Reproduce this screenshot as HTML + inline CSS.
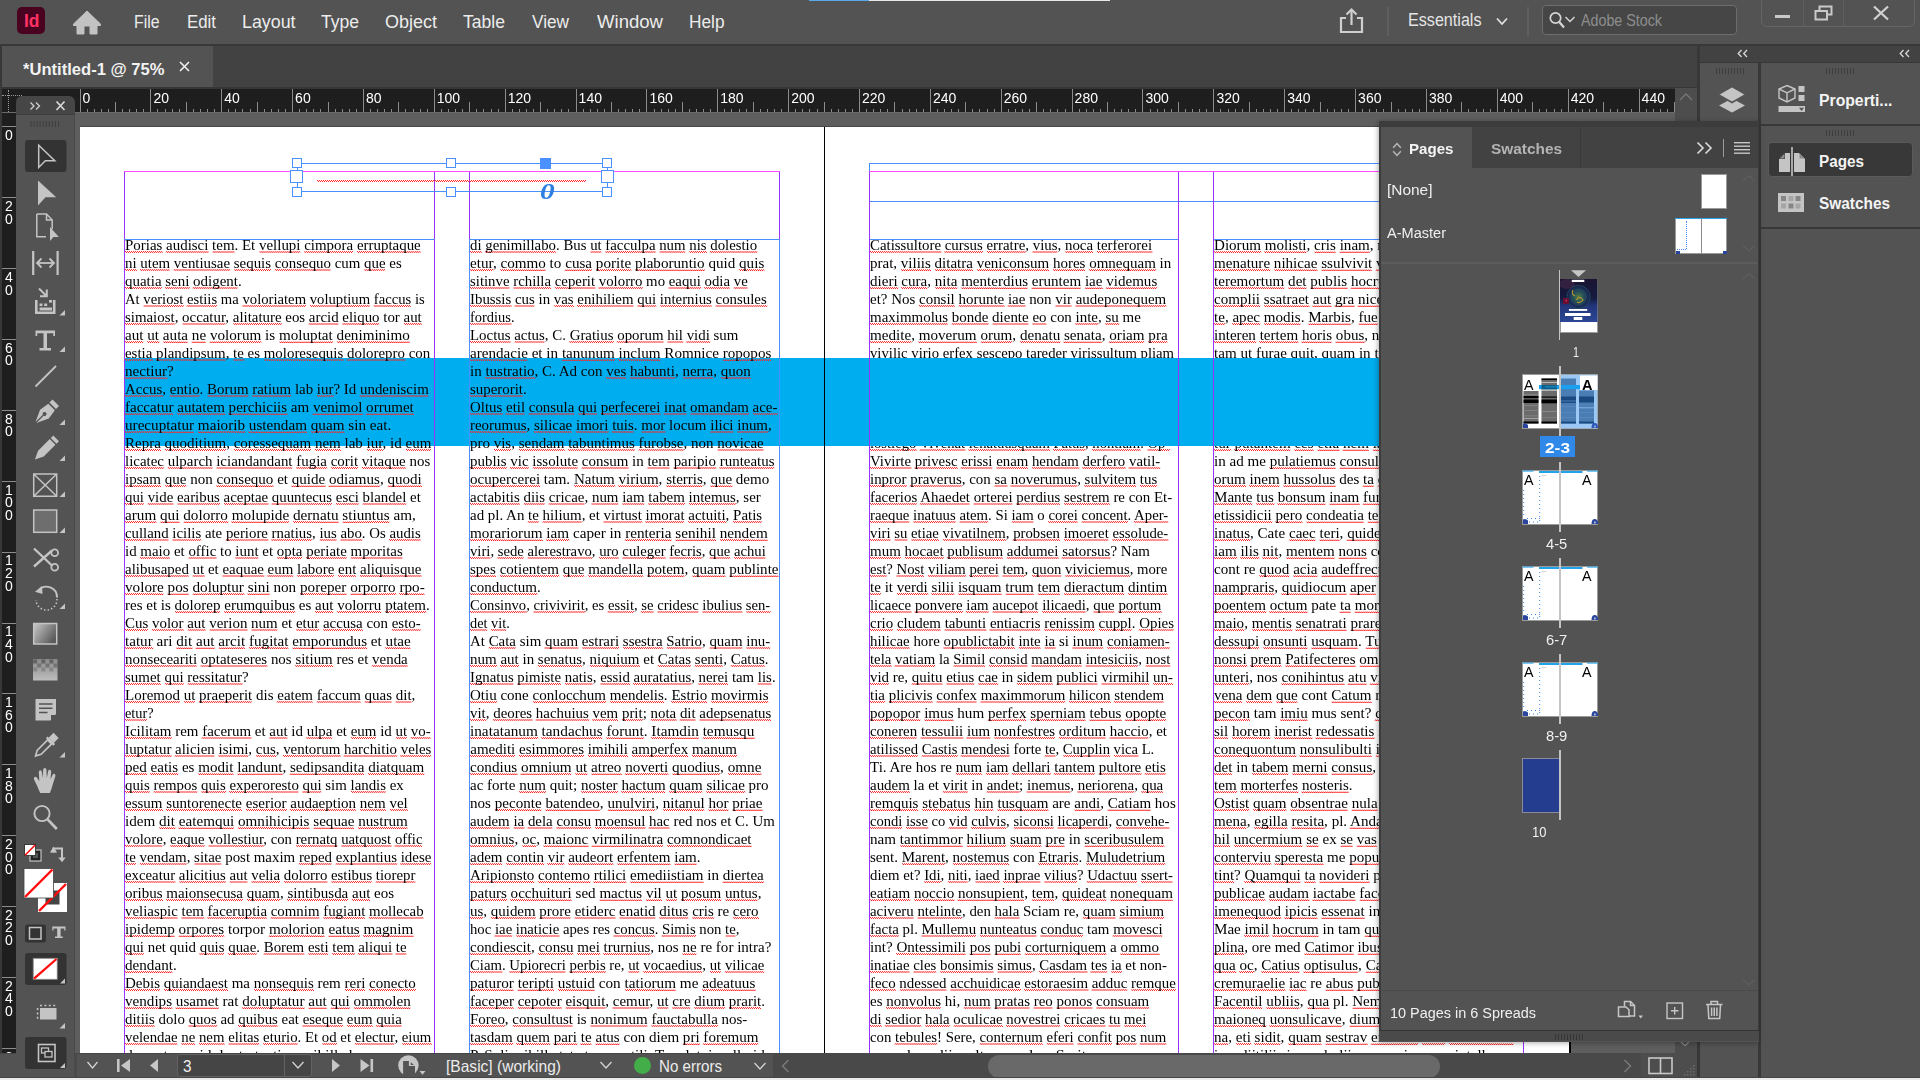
<!DOCTYPE html><html><head><meta charset="utf-8"><title>InDesign</title><style>*{box-sizing:border-box;margin:0;padding:0}
html,body{width:1920px;height:1080px;overflow:hidden;background:#535353;font-family:"Liberation Sans",sans-serif;color:#e6e6e6}
body{position:relative}
div,svg,span.a{position:absolute}
.t{white-space:nowrap}
#cv{left:0;top:0;width:1697px;height:1053px;overflow:hidden;background:#5e5e5e}
.ln{white-space:nowrap;font-family:"Liberation Serif",serif;font-size:15px;line-height:18px;height:18px;color:#000;transform-origin:0 0}
.ln span{background-image:linear-gradient(90deg,#ff2626 50%,transparent 50%),linear-gradient(90deg,transparent 50%,#ff2626 50%);background-size:2px 1px,2px 1px;background-repeat:repeat-x;background-position:0 14px,0 15px}
.pg{background:#9933ff;width:1px}
.mg{background:#ff4dff;height:1px}
.bl{background:#4a90ff}
.hd{width:10px;height:10px;border:1px solid #4a90ff;background:#fff}
.rl{color:#fff;font-size:14px;line-height:14px}

.tx{left:0;top:0;width:1697px;height:1053px;will-change:transform}
.sq{background-image:linear-gradient(90deg,#ff2626 50%,transparent 50%),linear-gradient(90deg,transparent 50%,#ff2626 50%);background-size:2px 1px,2px 1px;background-repeat:repeat-x;background-position:0 0,0 1px}
</style></head><body>
<div id="cv">
<div style="left:80px;top:127px;width:1489px;height:940px;background:#fff"></div>
<div style="left:1569px;top:127px;width:2px;height:940px;background:#000"></div>
<div style="left:80px;top:126px;width:1491px;height:1px;background:#474747"></div>
<div class="tx">
<div class="ln" style="left:869.8px;top:236.00px;transform:scaleX(0.9913)"><span>Catissultore</span> <span>cursus</span> <span>erratre</span>, <span>vius</span>, <span>noca</span> <span>terferorei</span></div>
<div class="ln" style="left:869.8px;top:254.00px;transform:scaleX(1.0001)">prat, <span>viliis</span> <span>ditatra</span> <span>veniconsum</span> <span>hores</span> <span>omnequam</span> in</div>
<div class="ln" style="left:869.8px;top:272.00px;transform:scaleX(1.0037)"><span>dieri</span> <span>cura</span>, <span>nita</span> <span>menterdius</span> <span>eruntem</span> <span>iae</span> <span>videmus</span></div>
<div class="ln" style="left:869.8px;top:290.00px;transform:scaleX(0.9973)">et? Nos <span>consil</span> <span>horunte</span> <span>iae</span> non <span>vir</span> <span>audeponequem</span></div>
<div class="ln" style="left:869.8px;top:308.00px;transform:scaleX(0.9967)"><span>maximmolus</span> <span>bonde</span> <span>diente</span> <span>eo</span> con <span>inte</span>, <span>su</span> me</div>
<div class="ln" style="left:869.8px;top:326.00px;transform:scaleX(1.0077)"><span>medite</span>, <span>moverum</span> <span>orum</span>, <span>denatu</span> <span>senata</span>, <span>oriam</span> <span>pra</span></div>
<div class="ln" style="left:869.8px;top:344.00px;transform:scaleX(0.9809)"><span>vivilic</span> <span>virio</span> <span>erfex</span> <span>sescepo</span> <span>tareder</span> <span>virissultum</span> <span>pliam</span></div>
<div class="ln" style="left:869.8px;top:362.00px;transform:scaleX(1.0168)"><span>publiam</span> nos <span>etiam</span> <span>tus</span> <span>conem</span> <span>dit</span> <span>faccus</span> <span>alitature</span></div>
<div class="ln" style="left:869.8px;top:380.00px;transform:scaleX(1.0161)"><span>vid</span> <span>morum</span> <span>pra</span> <span>noverit</span>, <span>quam</span> <span>iam</span> <span>inatus</span> <span>perei</span></div>
<div class="ln" style="left:869.8px;top:398.00px;transform:scaleX(1.0602)"><span>sentem</span> <span>orbis</span> <span>que</span> <span>condiis</span> hos <span>andit</span> <span>publis</span> <span>tem</span></div>
<div class="ln" style="left:869.8px;top:416.00px;transform:scaleX(1.0494)">con <span>verum</span> <span>Patus</span> <span>iam</span> nos <span>hilicae</span> <span>intem</span> <span>verio</span></div>
<div class="ln" style="left:869.8px;top:434.00px;transform:scaleX(0.9735)"><span>iostiego</span> <span>Vivenat</span> <span>ienatuusquam</span> <span>Patus</span>, <span>nontiam</span>. <span>Op-</span></div>
<div class="ln" style="left:869.8px;top:452.00px;transform:scaleX(0.9871)"><span>Vivirte</span> <span>privesc</span> <span>erissi</span> <span>enam</span> <span>hendam</span> <span>derfero</span> <span>vatil-</span></div>
<div class="ln" style="left:869.8px;top:470.00px;transform:scaleX(0.9963)"><span>inpror</span> <span>praverus</span>, con <span>sa</span> <span>noverumus</span>, <span>sulvitem</span> <span>tus</span></div>
<div class="ln" style="left:869.8px;top:488.00px;transform:scaleX(0.9953)"><span>facerios</span> <span>Ahaedet</span> <span>orterei</span> <span>perdius</span> <span>sestrem</span> re con Et-</div>
<div class="ln" style="left:869.8px;top:506.00px;transform:scaleX(0.9844)"><span>raeque</span> <span>inatuus</span> <span>atem</span>. Si <span>iam</span> o <span>corei</span> <span>concent</span>. <span>Aper-</span></div>
<div class="ln" style="left:869.8px;top:524.00px;transform:scaleX(0.9847)"><span>viri</span> <span>su</span> <span>etiae</span> <span>vivatilnem</span>, <span>probsen</span> <span>imoeret</span> <span>essolude-</span></div>
<div class="ln" style="left:869.8px;top:542.00px;transform:scaleX(0.9984)"><span>mum</span> <span>hocaet</span> <span>publisum</span> <span>addumei</span> <span>satorsus</span>? Nam</div>
<div class="ln" style="left:869.8px;top:560.00px;transform:scaleX(0.9814)"><span>est</span>? <span>Nost</span> <span>viliam</span> <span>perei</span> <span>tem</span>, <span>quon</span> <span>viviciemus</span>, more</div>
<div class="ln" style="left:869.8px;top:578.00px;transform:scaleX(1.0048)"><span>te</span> it <span>verdi</span> <span>silii</span> <span>isquam</span> <span>trum</span> <span>tem</span> <span>dieractum</span> <span>dintim</span></div>
<div class="ln" style="left:869.8px;top:596.00px;transform:scaleX(0.9890)"><span>licaece</span> <span>ponvere</span> <span>iam</span> <span>aucepot</span> <span>ilicaedi</span>, <span>que</span> <span>portum</span></div>
<div class="ln" style="left:869.8px;top:614.00px;transform:scaleX(0.9956)"><span>crio</span> <span>cludem</span> <span>tabunti</span> <span>entiacris</span> <span>renissim</span> <span>cuppl</span>. <span>Opies</span></div>
<div class="ln" style="left:869.8px;top:632.00px;transform:scaleX(0.9924)"><span>hilicae</span> hore <span>opublictabit</span> <span>inte</span> <span>ia</span> si <span>inum</span> <span>coniamen-</span></div>
<div class="ln" style="left:869.8px;top:650.00px;transform:scaleX(0.9845)"><span>tela</span> <span>vatiam</span> la <span>Simil</span> <span>consid</span> <span>mandam</span> <span>intesiciis</span>, <span>nost</span></div>
<div class="ln" style="left:869.8px;top:668.00px;transform:scaleX(0.9933)"><span>vid</span> re, <span>quitu</span> <span>etius</span> <span>cae</span> in <span>sidem</span> <span>publici</span> <span>virmihil</span> <span>un-</span></div>
<div class="ln" style="left:869.8px;top:686.00px;transform:scaleX(0.9954)"><span>tia</span> <span>plicivis</span> <span>confex</span> <span>maximmorum</span> <span>hilicon</span> <span>stendem</span></div>
<div class="ln" style="left:869.8px;top:704.00px;transform:scaleX(1.0071)"><span>popopor</span> <span>imus</span> hum <span>perfex</span> <span>sperniam</span> <span>tebus</span> <span>opopte</span></div>
<div class="ln" style="left:869.8px;top:722.00px;transform:scaleX(0.9941)"><span>coneren</span> <span>tessulii</span> <span>ium</span> <span>nonfestres</span> <span>orditum</span> <span>haccio</span>, et</div>
<div class="ln" style="left:869.8px;top:740.00px;transform:scaleX(0.9760)"><span>atilissed</span> <span>Castis</span> <span>mendesi</span> forte <span>te</span>, <span>Cupplin</span> <span>vica</span> L.</div>
<div class="ln" style="left:869.8px;top:758.00px;transform:scaleX(0.9991)">Ti. Are hos re <span>num</span> <span>iam</span> <span>dellari</span> <span>tantem</span> <span>pultore</span> <span>etis</span></div>
<div class="ln" style="left:869.8px;top:776.00px;transform:scaleX(0.9971)"><span>audem</span> la et <span>virit</span> in <span>andet</span>; <span>inemus</span>, <span>neriorena</span>, <span>qua</span></div>
<div class="ln" style="left:869.8px;top:794.00px;transform:scaleX(1.0025)"><span>remquis</span> <span>stebatus</span> <span>hin</span> <span>tusquam</span> are <span>andi</span>, <span>Catiam</span> hos</div>
<div class="ln" style="left:869.8px;top:812.00px;transform:scaleX(0.9720)"><span>condi</span> <span>isse</span> co <span>vid</span> <span>culvis</span>, <span>siconsi</span> <span>licaperdi</span>, <span>convehe-</span></div>
<div class="ln" style="left:869.8px;top:830.00px;transform:scaleX(1.0082)">nam <span>tantimmor</span> <span>hilium</span> <span>suam</span> <span>pre</span> in <span>sceribusulem</span></div>
<div class="ln" style="left:869.8px;top:848.00px;transform:scaleX(1.0009)">sent. <span>Marent</span>, <span>nostemus</span> con <span>Etraris</span>. <span>Muludetrium</span></div>
<div class="ln" style="left:869.8px;top:866.00px;transform:scaleX(0.9854)">diem et? <span>Idi</span>, <span>niti</span>, <span>iaed</span> <span>inprae</span> <span>vilius</span>? <span>Udactuu</span> <span>ssert-</span></div>
<div class="ln" style="left:869.8px;top:884.00px;transform:scaleX(1.0058)"><span>eatiam</span> <span>noccio</span> <span>nonsupient</span>, <span>tem</span>, <span>quideat</span> <span>nonequam</span></div>
<div class="ln" style="left:869.8px;top:902.00px;transform:scaleX(0.9900)"><span>aciveru</span> <span>ntelinte</span>, den <span>hala</span> Sciam re, <span>quam</span> <span>simium</span></div>
<div class="ln" style="left:869.8px;top:920.00px;transform:scaleX(0.9908)"><span>facta</span> pl. <span>Mullemu</span> <span>nunteatus</span> <span>conduc</span> tam <span>movesci</span></div>
<div class="ln" style="left:869.8px;top:938.00px;transform:scaleX(1.0057)">int? <span>Ontessimili</span> <span>pos</span> <span>pubi</span> <span>corturniquem</span> a <span>ommo</span></div>
<div class="ln" style="left:869.8px;top:956.00px;transform:scaleX(0.9885)"><span>inatiae</span> <span>cles</span> <span>bonsimis</span> <span>simus</span>, <span>Casdam</span> <span>tes</span> <span>ia</span> et non-</div>
<div class="ln" style="left:869.8px;top:974.00px;transform:scaleX(0.9933)"><span>feco</span> <span>ndessed</span> <span>acchuidicae</span> <span>estoraesim</span> <span>adduc</span> <span>remque</span></div>
<div class="ln" style="left:869.8px;top:992.00px;transform:scaleX(0.9973)">es <span>nonvolus</span> hi, <span>num</span> <span>pratas</span> <span>reo</span> <span>ponos</span> <span>consuam</span></div>
<div class="ln" style="left:869.8px;top:1010.00px;transform:scaleX(0.9854)"><span>di</span> <span>sedior</span> <span>hala</span> <span>oculicae</span> <span>novestrei</span> <span>cricaes</span> <span>tu</span> <span>mei</span></div>
<div class="ln" style="left:869.8px;top:1028.00px;transform:scaleX(0.9877)">con <span>tebules</span>! Sere, <span>conternum</span> <span>eferi</span> <span>confit</span> <span>pos</span> <span>num</span></div>
<div class="ln" style="left:869.8px;top:1046.00px;transform:scaleX(1.0742)"><span>vernulum</span> <span>diis</span>, <span>ultum</span>, <span>nulus</span>. <span>Serit</span>,</div>
<div class="ln" style="left:1214.3px;top:236.00px;transform:scaleX(1.0050)"><span>Diorum</span> <span>molisti</span>, <span>cris</span> <span>inam</span>, nos <span>hilicae</span> <span>tem</span></div>
<div class="ln" style="left:1214.3px;top:254.00px;transform:scaleX(1.0050)"><span>menature</span> <span>nihicae</span> <span>ssulvivit</span> <span>vit</span>, <span>consum</span></div>
<div class="ln" style="left:1214.3px;top:272.00px;transform:scaleX(1.0050)"><span>teremortum</span> <span>det</span> <span>publis</span> <span>hocrum</span> <span>inatus</span></div>
<div class="ln" style="left:1214.3px;top:290.00px;transform:scaleX(1.0050)"><span>complii</span> <span>ssatraet</span> <span>aut</span> <span>gra</span> <span>nices</span> <span>publiam</span></div>
<div class="ln" style="left:1214.3px;top:308.00px;transform:scaleX(1.0050)"><span>te</span>, <span>apec</span> <span>modis</span>. <span>Marbis</span>, <span>fue</span> con <span>vis</span> ad</div>
<div class="ln" style="left:1214.3px;top:326.00px;transform:scaleX(1.0050)"><span>interen</span> <span>tertem</span> <span>horis</span> <span>obus</span>, nos <span>etiam</span></div>
<div class="ln" style="left:1214.3px;top:344.00px;transform:scaleX(1.0050)">tam <span>ut</span> <span>furae</span> quit, <span>quam</span> in <span>te</span>, <span>conem</span></div>
<div class="ln" style="left:1214.3px;top:362.00px;transform:scaleX(1.0050)"><span>publis</span> nos <span>etiam</span> <span>tus</span> <span>conem</span> <span>dit</span> <span>faccus</span></div>
<div class="ln" style="left:1214.3px;top:380.00px;transform:scaleX(1.0050)"><span>vid</span> <span>morum</span> <span>pra</span> <span>noverit</span>, <span>quam</span> <span>iam</span></div>
<div class="ln" style="left:1214.3px;top:398.00px;transform:scaleX(1.0050)"><span>sentem</span> <span>orbis</span> <span>que</span> <span>condiis</span> hos <span>andit</span></div>
<div class="ln" style="left:1214.3px;top:416.00px;transform:scaleX(1.0050)">con <span>verum</span> <span>Patus</span> <span>iam</span> nos <span>hilicae</span></div>
<div class="ln" style="left:1214.3px;top:434.00px;transform:scaleX(1.0050)"><span>tur</span> <span>putantem</span> <span>ees</span> <span>etia</span> <span>nem</span> <span>lam</span> <span>nosti</span> <span>verit</span></div>
<div class="ln" style="left:1214.3px;top:452.00px;transform:scaleX(1.0050)">in ad me <span>pulatiemus</span> <span>consultus</span> <span>inam</span></div>
<div class="ln" style="left:1214.3px;top:470.00px;transform:scaleX(1.0050)"><span>orum</span> <span>inem</span> <span>hussolus</span> des <span>ta</span> <span>qui</span> <span>publis</span></div>
<div class="ln" style="left:1214.3px;top:488.00px;transform:scaleX(1.0050)"><span>Mante</span> <span>tus</span> <span>bonsum</span> <span>inam</span> <span>fur</span>, <span>quam</span> <span>te</span></div>
<div class="ln" style="left:1214.3px;top:506.00px;transform:scaleX(1.0050)"><span>etissidicii</span> <span>pero</span> <span>condeatia</span> <span>te</span>, C. <span>Opies</span></div>
<div class="ln" style="left:1214.3px;top:524.00px;transform:scaleX(1.0050)"><span>inatus</span>, Cate <span>caec</span> <span>teri</span>, <span>quidet</span> <span>iam</span> nos</div>
<div class="ln" style="left:1214.3px;top:542.00px;transform:scaleX(1.0050)"><span>iam</span> <span>ilis</span> <span>nit</span>, <span>mentem</span> <span>nons</span> con <span>verum</span></div>
<div class="ln" style="left:1214.3px;top:560.00px;transform:scaleX(1.0050)">cont re <span>quod</span> <span>acia</span> <span>audeffrect</span>, <span>quam</span></div>
<div class="ln" style="left:1214.3px;top:578.00px;transform:scaleX(1.0050)"><span>nampraris</span>, <span>quidiocum</span> <span>aper</span> <span>hilicae</span></div>
<div class="ln" style="left:1214.3px;top:596.00px;transform:scaleX(1.0050)"><span>poentem</span> <span>octum</span> pate <span>ta</span> <span>mor</span> <span>publis</span></div>
<div class="ln" style="left:1214.3px;top:614.00px;transform:scaleX(1.0050)"><span>maio</span>, <span>mentis</span> <span>senatrati</span> <span>prare</span> <span>iam</span></div>
<div class="ln" style="left:1214.3px;top:632.00px;transform:scaleX(1.0050)"><span>dessupi</span> <span>onsunti</span> <span>usquam</span>. <span>Tu</span> <span>verit</span></div>
<div class="ln" style="left:1214.3px;top:650.00px;transform:scaleX(1.0050)"><span>nonsi</span> <span>prem</span> <span>Patifecteres</span> <span>oma</span> nos</div>
<div class="ln" style="left:1214.3px;top:668.00px;transform:scaleX(1.0050)"><span>unteri</span>, nos <span>conihintus</span> <span>atu</span> <span>vid</span> rem</div>
<div class="ln" style="left:1214.3px;top:686.00px;transform:scaleX(1.0050)"><span>vena</span> <span>dem</span> <span>que</span> cont <span>Catum</span> re, <span>que</span></div>
<div class="ln" style="left:1214.3px;top:704.00px;transform:scaleX(1.0050)"><span>pecon</span> tam <span>imiu</span> mus sent? <span>qua</span> re</div>
<div class="ln" style="left:1214.3px;top:722.00px;transform:scaleX(1.0050)"><span>sil</span> <span>horem</span> <span>inerist</span> <span>redessatis</span> sum</div>
<div class="ln" style="left:1214.3px;top:740.00px;transform:scaleX(1.0050)"><span>conequontum</span> <span>nonsulibulti</span> <span>iam</span></div>
<div class="ln" style="left:1214.3px;top:758.00px;transform:scaleX(1.0050)"><span>det</span> in <span>tabem</span> <span>merni</span> <span>consus</span>, <span>quam</span></div>
<div class="ln" style="left:1214.3px;top:776.00px;transform:scaleX(1.0050)"><span>tem</span> <span>morterfes</span> <span>nosteris</span>.</div>
<div class="ln" style="left:1214.3px;top:794.00px;transform:scaleX(1.0050)"><span>Ostist</span> <span>quam</span> <span>obsentrae</span> <span>nula</span> <span>publis</span></div>
<div class="ln" style="left:1214.3px;top:812.00px;transform:scaleX(1.0050)"><span>mena</span>, <span>egilla</span> <span>resita</span>, pl. <span>Anda</span> <span>vero</span></div>
<div class="ln" style="left:1214.3px;top:830.00px;transform:scaleX(1.0050)"><span>hil</span> <span>uncermium</span> <span>se</span> ex <span>se</span> <span>vas</span> sent</div>
<div class="ln" style="left:1214.3px;top:848.00px;transform:scaleX(1.0050)"><span>conterviu</span> <span>speresta</span> me <span>popublis</span></div>
<div class="ln" style="left:1214.3px;top:866.00px;transform:scaleX(1.0050)"><span>tint</span>? <span>Quamqui</span> <span>ta</span> <span>novideri</span> pro</div>
<div class="ln" style="left:1214.3px;top:884.00px;transform:scaleX(1.0050)"><span>publicae</span> <span>audam</span> <span>iactabe</span> <span>faccus</span></div>
<div class="ln" style="left:1214.3px;top:902.00px;transform:scaleX(1.0050)"><span>imenequod</span> <span>ipicis</span> <span>essenat</span> in <span>tem</span></div>
<div class="ln" style="left:1214.3px;top:920.00px;transform:scaleX(1.0050)">Mae <span>imil</span> <span>hocrum</span> in tam <span>quam</span></div>
<div class="ln" style="left:1214.3px;top:938.00px;transform:scaleX(1.0050)"><span>plina</span>, ore med <span>Catimor</span> <span>ibus</span> re</div>
<div class="ln" style="left:1214.3px;top:956.00px;transform:scaleX(1.0050)"><span>qua</span> <span>oc</span>, <span>Catius</span> <span>optisulus</span>, <span>Catum</span></div>
<div class="ln" style="left:1214.3px;top:974.00px;transform:scaleX(1.0050)"><span>cremuraelie</span> <span>iac</span> re <span>abus</span> <span>publis</span></div>
<div class="ln" style="left:1214.3px;top:992.00px;transform:scaleX(1.0050)"><span>Facentil</span> <span>ubliis</span>, <span>qua</span> pl. <span>Nem</span>, <span>que</span></div>
<div class="ln" style="left:1214.3px;top:1010.00px;transform:scaleX(1.0050)"><span>maioneq</span> <span>uonsulicave</span>, <span>dium</span> <span>verit</span></div>
<div class="ln" style="left:1214.3px;top:1028.00px;transform:scaleX(1.0050)"><span>na</span>, <span>eti</span> <span>sidit</span>, <span>quam</span> <span>sestrav</span> <span>erfecrid</span> <span>ium</span> <span>conculicae</span></div>
<div class="ln" style="left:1214.3px;top:1046.00px;transform:scaleX(1.0050)"><span>ina</span>, <span>diitiliis</span> <span>iam</span>, <span>ubuliis</span> <span>verum</span> <span>iam</span> nos <span>intell</span></div>
</div>
<div style="left:124px;top:358px;width:1400px;height:88px;background:#00adef"></div>
<div class="tx">
<div class="ln" style="left:125.3px;top:236.00px;transform:scaleX(0.9956)"><span>Porias</span> <span>audisci</span> <span>tem</span>. Et <span>vellupi</span> <span>cimpora</span> <span>erruptaque</span></div>
<div class="ln" style="left:125.3px;top:254.00px;transform:scaleX(0.9929)"><span>ni</span> <span>utem</span> <span>ventiusae</span> <span>sequis</span> <span>consequo</span> cum <span>que</span> es</div>
<div class="ln" style="left:125.3px;top:272.00px;transform:scaleX(0.9970)"><span>quatia</span> <span>seni</span> <span>odigent</span>.</div>
<div class="ln" style="left:125.3px;top:290.00px;transform:scaleX(0.9788)">At <span>veriost</span> <span>estiis</span> ma <span>voloriatem</span> <span>voluptium</span> <span>faccus</span> is</div>
<div class="ln" style="left:125.3px;top:308.00px;transform:scaleX(0.9927)"><span>simaiost</span>, <span>occatur</span>, <span>alitature</span> eos <span>arcid</span> <span>eliquo</span> tor <span>aut</span></div>
<div class="ln" style="left:125.3px;top:326.00px;transform:scaleX(1.0094)"><span>aut</span> <span>ut</span> <span>auta</span> <span>ne</span> <span>volorum</span> is <span>moluptat</span> <span>deniminimo</span></div>
<div class="ln" style="left:125.3px;top:344.00px;transform:scaleX(0.9941)"><span>estia</span> <span>plandipsum</span>, <span>te</span> es <span>moloresequis</span> <span>dolorepro</span> con</div>
<div class="ln" style="left:125.3px;top:362.00px;transform:scaleX(1.0082)"><span>nectiur</span>?</div>
<div class="ln" style="left:125.3px;top:380.00px;transform:scaleX(0.9946)"><span>Accus</span>, <span>entio</span>. <span>Borum</span> <span>ratium</span> lab <span>iur</span>? Id <span>undeniscim</span></div>
<div class="ln" style="left:125.3px;top:398.00px;transform:scaleX(1.0032)"><span>faccatur</span> <span>autatem</span> <span>perchiciis</span> am <span>venimol</span> <span>orrumet</span></div>
<div class="ln" style="left:125.3px;top:416.00px;transform:scaleX(1.0112)"><span>urecuptatur</span> <span>maiorib</span> <span>ustendam</span> <span>quam</span> sin eat.</div>
<div class="ln" style="left:125.3px;top:434.00px;transform:scaleX(0.9997)"><span>Repra</span> <span>quoditium</span>, <span>coressequam</span> <span>nem</span> lab <span>iur</span>, id <span>eum</span></div>
<div class="ln" style="left:125.3px;top:452.00px;transform:scaleX(0.9956)"><span>licatec</span> <span>ulparch</span> <span>iciandandant</span> <span>fugia</span> <span>corit</span> <span>vitaque</span> nos</div>
<div class="ln" style="left:125.3px;top:470.00px;transform:scaleX(1.0031)"><span>ipsam</span> <span>que</span> non <span>consequo</span> et <span>quide</span> <span>odiamus</span>, <span>quodi</span></div>
<div class="ln" style="left:125.3px;top:488.00px;transform:scaleX(0.9902)"><span>qui</span> <span>vide</span> <span>earibus</span> <span>aceptae</span> <span>quuntecus</span> <span>esci</span> <span>blandel</span> et</div>
<div class="ln" style="left:125.3px;top:506.00px;transform:scaleX(1.0128)"><span>arum</span> <span>qui</span> <span>dolorro</span> <span>molupide</span> <span>dernatu</span> <span>stiuntus</span> am,</div>
<div class="ln" style="left:125.3px;top:524.00px;transform:scaleX(0.9887)"><span>culland</span> <span>icilis</span> ate <span>periore</span> <span>rnatius</span>, <span>ius</span> <span>abo</span>. Os <span>audis</span></div>
<div class="ln" style="left:125.3px;top:542.00px;transform:scaleX(0.9945)">id <span>maio</span> et <span>offic</span> to <span>iunt</span> et <span>opta</span> <span>periate</span> <span>mporitas</span></div>
<div class="ln" style="left:125.3px;top:560.00px;transform:scaleX(0.9953)"><span>alibusaped</span> <span>ut</span> et <span>eaquae</span> <span>eum</span> <span>labore</span> <span>ent</span> <span>aliquisque</span></div>
<div class="ln" style="left:125.3px;top:578.00px;transform:scaleX(1.0118)"><span>volore</span> <span>pos</span> <span>doluptur</span> <span>sini</span> non <span>poreper</span> <span>orporro</span> <span>rpo-</span></div>
<div class="ln" style="left:125.3px;top:596.00px;transform:scaleX(1.0006)">res et is <span>dolorep</span> <span>erumquibus</span> es <span>aut</span> <span>volorru</span> <span>ptatem</span>.</div>
<div class="ln" style="left:125.3px;top:614.00px;transform:scaleX(0.9956)"><span>Cus</span> <span>volor</span> <span>aut</span> <span>verion</span> <span>num</span> et <span>etur</span> <span>accusa</span> con <span>esto-</span></div>
<div class="ln" style="left:125.3px;top:632.00px;transform:scaleX(1.0087)"><span>tatur</span> ari <span>dit</span> <span>aut</span> <span>arcit</span> <span>fugitat</span> <span>emporundus</span> et <span>utae</span></div>
<div class="ln" style="left:125.3px;top:650.00px;transform:scaleX(0.9952)"><span>nonseceariti</span> <span>optateseres</span> nos <span>sitium</span> res et <span>venda</span></div>
<div class="ln" style="left:125.3px;top:668.00px;transform:scaleX(0.9965)"><span>sumet</span> <span>qui</span> <span>ressitatur</span>?</div>
<div class="ln" style="left:125.3px;top:686.00px;transform:scaleX(0.9985)"><span>Loremod</span> <span>ut</span> <span>praeperit</span> dis <span>eatem</span> <span>faccum</span> <span>quas</span> <span>dit</span>,</div>
<div class="ln" style="left:125.3px;top:704.00px;transform:scaleX(0.9574)"><span>etur</span>?</div>
<div class="ln" style="left:125.3px;top:722.00px;transform:scaleX(0.9959)"><span>Icilitam</span> rem <span>facerum</span> et <span>aut</span> id <span>ulpa</span> et <span>eum</span> id <span>ut</span> <span>vo-</span></div>
<div class="ln" style="left:125.3px;top:740.00px;transform:scaleX(0.9937)"><span>luptatur</span> <span>alicien</span> <span>isimi</span>, <span>cus</span>, <span>ventorum</span> <span>harchitio</span> <span>veles</span></div>
<div class="ln" style="left:125.3px;top:758.00px;transform:scaleX(1.0045)"><span>ped</span> <span>eatis</span> es <span>modit</span> <span>landunt</span>, <span>sedipsandita</span> <span>diatquam</span></div>
<div class="ln" style="left:125.3px;top:776.00px;transform:scaleX(0.9911)"><span>quis</span> <span>rempos</span> <span>quis</span> <span>experoresto</span> <span>qui</span> sim <span>landis</span> ex</div>
<div class="ln" style="left:125.3px;top:794.00px;transform:scaleX(0.9996)"><span>essum</span> <span>suntorenecte</span> <span>eserior</span> <span>audaeption</span> <span>nem</span> <span>vel</span></div>
<div class="ln" style="left:125.3px;top:812.00px;transform:scaleX(1.0084)">idem <span>dit</span> <span>eatemqui</span> <span>omnihicipis</span> <span>sequae</span> <span>nustrum</span></div>
<div class="ln" style="left:125.3px;top:830.00px;transform:scaleX(0.9836)"><span>volore</span>, <span>eaque</span> <span>vollestiur</span>, con <span>rernatq</span> <span>uatquost</span> <span>offic</span></div>
<div class="ln" style="left:125.3px;top:848.00px;transform:scaleX(0.9937)"><span>te</span> <span>vendam</span>, <span>sitae</span> post maxim <span>reped</span> <span>explantius</span> <span>idese</span></div>
<div class="ln" style="left:125.3px;top:866.00px;transform:scaleX(0.9872)"><span>exceatur</span> <span>alicitius</span> <span>aut</span> <span>velia</span> <span>dolorro</span> <span>estibus</span> <span>tiorepr</span></div>
<div class="ln" style="left:125.3px;top:884.00px;transform:scaleX(0.9999)"><span>oribus</span> <span>maionsecusa</span> <span>quam</span>, <span>sintibusda</span> <span>aut</span> eos</div>
<div class="ln" style="left:125.3px;top:902.00px;transform:scaleX(0.9913)"><span>veliaspic</span> <span>tem</span> <span>faceruptia</span> <span>comnim</span> <span>fugiant</span> <span>mollecab</span></div>
<div class="ln" style="left:125.3px;top:920.00px;transform:scaleX(1.0129)"><span>ipidemp</span> <span>orpores</span> torpor <span>molorion</span> <span>eatus</span> <span>magnim</span></div>
<div class="ln" style="left:125.3px;top:938.00px;transform:scaleX(0.9908)"><span>qui</span> net quid <span>quis</span> <span>quae</span>. <span>Borem</span> <span>esti</span> <span>tem</span> <span>aliqui</span> <span>te</span></div>
<div class="ln" style="left:125.3px;top:956.00px;transform:scaleX(1.0091)"><span>dendant</span>.</div>
<div class="ln" style="left:125.3px;top:974.00px;transform:scaleX(0.9999)"><span>Debis</span> <span>quiandaest</span> ma <span>nonsequis</span> rem <span>reri</span> <span>conecto</span></div>
<div class="ln" style="left:125.3px;top:992.00px;transform:scaleX(1.0086)"><span>vendips</span> <span>usamet</span> rat <span>doluptatur</span> <span>aut</span> <span>qui</span> <span>ommolen</span></div>
<div class="ln" style="left:125.3px;top:1010.00px;transform:scaleX(0.9914)"><span>ditiis</span> dolo <span>quos</span> ad <span>quibus</span> eat <span>eseque</span> <span>eum</span> <span>quia</span></div>
<div class="ln" style="left:125.3px;top:1028.00px;transform:scaleX(0.9864)"><span>velendae</span> <span>ne</span> <span>nem</span> <span>elitas</span> <span>eturio</span>. Et <span>od</span> et <span>electur</span>, <span>eium</span></div>
<div class="ln" style="left:125.3px;top:1046.00px;transform:scaleX(1.0386)"><span>dem</span> <span>ute</span> <span>accid</span> <span>dunto</span> <span>tectiore</span> <span>nihilla</span> <span>bor</span> sum</div>
<div class="ln" style="left:470.3px;top:236.00px;transform:scaleX(0.9873)"><span>di</span> <span>genimillabo</span>. Bus <span>ut</span> <span>facculpa</span> <span>num</span> <span>nis</span> <span>dolestio</span></div>
<div class="ln" style="left:470.3px;top:254.00px;transform:scaleX(1.0081)"><span>etur</span>, <span>commo</span> to <span>cusa</span> <span>porite</span> <span>plaboruntio</span> quid <span>quis</span></div>
<div class="ln" style="left:470.3px;top:272.00px;transform:scaleX(0.9877)"><span>sitinve</span> <span>rchilla</span> <span>ceperit</span> <span>volorro</span> mo <span>eaqui</span> <span>odia</span> <span>ve</span></div>
<div class="ln" style="left:470.3px;top:290.00px;transform:scaleX(0.9905)"><span>Ibussis</span> <span>cus</span> in <span>vas</span> <span>enihiliem</span> <span>qui</span> <span>internius</span> <span>consules</span></div>
<div class="ln" style="left:470.3px;top:308.00px;transform:scaleX(0.9623)"><span>fordius</span>.</div>
<div class="ln" style="left:470.3px;top:326.00px;transform:scaleX(0.9923)"><span>Loctus</span> <span>actus</span>, C. <span>Gratius</span> <span>oporum</span> <span>hil</span> <span>vidi</span> sum</div>
<div class="ln" style="left:470.3px;top:344.00px;transform:scaleX(1.0074)"><span>arendacie</span> et in <span>tanunum</span> <span>inclum</span> Romnice <span>ropopos</span></div>
<div class="ln" style="left:470.3px;top:362.00px;transform:scaleX(0.9997)">in <span>tustratio</span>, C. Ad con <span>ves</span> <span>habunti</span>, <span>nerra</span>, <span>quon</span></div>
<div class="ln" style="left:470.3px;top:380.00px;transform:scaleX(0.9935)"><span>superorit</span>.</div>
<div class="ln" style="left:470.3px;top:398.00px;transform:scaleX(0.9931)"><span>Oltus</span> <span>etil</span> <span>consula</span> <span>qui</span> <span>perfecerei</span> <span>inat</span> <span>omandam</span> <span>ace-</span></div>
<div class="ln" style="left:470.3px;top:416.00px;transform:scaleX(0.9975)"><span>reorumus</span>, <span>silicae</span> <span>imori</span> <span>tuis</span>. <span>mor</span> locum <span>ilici</span> <span>inum</span>,</div>
<div class="ln" style="left:470.3px;top:434.00px;transform:scaleX(0.9986)">pro <span>vis</span>, <span>sendam</span> <span>tabuntimus</span> <span>furobse</span>, non <span>novicae</span></div>
<div class="ln" style="left:470.3px;top:452.00px;transform:scaleX(0.9972)"><span>publis</span> <span>vic</span> <span>issolute</span> <span>consum</span> in <span>tem</span> <span>paripio</span> <span>runteatus</span></div>
<div class="ln" style="left:470.3px;top:470.00px;transform:scaleX(1.0018)"><span>ocupercerei</span> tam. <span>Natum</span> <span>virium</span>, <span>sterris</span>, <span>que</span> demo</div>
<div class="ln" style="left:470.3px;top:488.00px;transform:scaleX(0.9956)"><span>actabitis</span> <span>diis</span> <span>cricae</span>, <span>num</span> <span>iam</span> <span>tabem</span> <span>intemus</span>, ser</div>
<div class="ln" style="left:470.3px;top:506.00px;transform:scaleX(0.9959)">ad pl. An <span>te</span> <span>hilium</span>, et <span>virtust</span> <span>imorat</span> <span>actuiti</span>, <span>Patis</span></div>
<div class="ln" style="left:470.3px;top:524.00px;transform:scaleX(1.0124)"><span>morariorum</span> <span>iam</span> caper in <span>renteria</span> <span>senihil</span> <span>nendem</span></div>
<div class="ln" style="left:470.3px;top:542.00px;transform:scaleX(0.9780)"><span>viri</span>, <span>sede</span> <span>alerestravo</span>, <span>uro</span> <span>culeger</span> <span>fecris</span>, <span>que</span> <span>achui</span></div>
<div class="ln" style="left:470.3px;top:560.00px;transform:scaleX(1.0019)"><span>spes</span> <span>cotientem</span> <span>que</span> <span>mandella</span> <span>potem</span>, <span>quam</span> <span>publinte</span></div>
<div class="ln" style="left:470.3px;top:578.00px;transform:scaleX(1.0043)"><span>conductum</span>.</div>
<div class="ln" style="left:470.3px;top:596.00px;transform:scaleX(0.9764)"><span>Consinvo</span>, <span>crivivirit</span>, es <span>essit</span>, <span>se</span> <span>cridesc</span> <span>ibulius</span> <span>sen-</span></div>
<div class="ln" style="left:470.3px;top:614.00px;transform:scaleX(0.9530)"><span>det</span> <span>vit</span>.</div>
<div class="ln" style="left:470.3px;top:632.00px;transform:scaleX(0.9940)">At <span>Cata</span> sim <span>quam</span> <span>estrari</span> <span>ssestra</span> <span>Satrio</span>, <span>quam</span> <span>inu-</span></div>
<div class="ln" style="left:470.3px;top:650.00px;transform:scaleX(0.9993)"><span>num</span> <span>aut</span> in <span>senatus</span>, <span>niquium</span> et <span>Catas</span> <span>senti</span>, <span>Catus</span>.</div>
<div class="ln" style="left:470.3px;top:668.00px;transform:scaleX(0.9884)"><span>Ignatus</span> <span>pimiste</span> <span>natis</span>, <span>essid</span> <span>auratatius</span>, <span>nerei</span> tam <span>lis</span>.</div>
<div class="ln" style="left:470.3px;top:686.00px;transform:scaleX(1.0008)"><span>Otiu</span> cone <span>conlocchum</span> <span>mendelis</span>. <span>Estrio</span> <span>movirmis</span></div>
<div class="ln" style="left:470.3px;top:704.00px;transform:scaleX(0.9936)"><span>vit</span>, <span>deores</span> <span>hachuius</span> <span>vem</span> <span>prit</span>; <span>nota</span> <span>dit</span> <span>adepsenatus</span></div>
<div class="ln" style="left:470.3px;top:722.00px;transform:scaleX(1.0171)"><span>inatatanum</span> <span>tandachus</span> <span>forunt</span>. <span>Itamdin</span> <span>temusqu</span></div>
<div class="ln" style="left:470.3px;top:740.00px;transform:scaleX(1.0000)"><span>amediti</span> <span>esimmores</span> <span>imihili</span> <span>amperfex</span> <span>manum</span></div>
<div class="ln" style="left:470.3px;top:758.00px;transform:scaleX(1.0122)"><span>condius</span> <span>omnium</span> <span>ut</span> <span>atreo</span> <span>noverti</span> <span>quodius</span>, <span>omne</span></div>
<div class="ln" style="left:470.3px;top:776.00px;transform:scaleX(1.0009)">ac forte <span>num</span> quit; <span>noster</span> <span>hactum</span> <span>quam</span> <span>silicae</span> pro</div>
<div class="ln" style="left:470.3px;top:794.00px;transform:scaleX(1.0057)">nos <span>peconte</span> <span>batendeo</span>, <span>unulviri</span>, <span>nitanul</span> <span>hor</span> <span>priae</span></div>
<div class="ln" style="left:470.3px;top:812.00px;transform:scaleX(0.9925)"><span>audem</span> <span>ia</span> <span>dela</span> <span>consu</span> <span>moensul</span> <span>hac</span> red nos et C. Um</div>
<div class="ln" style="left:470.3px;top:830.00px;transform:scaleX(1.0056)"><span>omnius</span>, <span>oc</span>, <span>maionc</span> <span>virmilinatra</span> <span>comnondicaet</span></div>
<div class="ln" style="left:470.3px;top:848.00px;transform:scaleX(1.0026)"><span>adem</span> <span>contin</span> <span>vir</span> <span>audeort</span> <span>erfentem</span> <span>iam</span>.</div>
<div class="ln" style="left:470.3px;top:866.00px;transform:scaleX(1.0029)"><span>Aripionsto</span> <span>contemo</span> <span>rtilici</span> <span>emediistiam</span> in <span>diertea</span></div>
<div class="ln" style="left:470.3px;top:884.00px;transform:scaleX(1.0050)"><span>paturs</span> <span>occhuituri</span> sed <span>mactus</span> <span>vil</span> <span>ut</span> <span>posum</span> <span>untus</span>,</div>
<div class="ln" style="left:470.3px;top:902.00px;transform:scaleX(0.9966)"><span>us</span>, <span>quidem</span> <span>prore</span> <span>etiderc</span> <span>enatid</span> <span>ditus</span> <span>cris</span> re <span>cero</span></div>
<div class="ln" style="left:470.3px;top:920.00px;transform:scaleX(0.9829)">hoc <span>iae</span> <span>inaticie</span> apes res <span>concus</span>. <span>Simis</span> non <span>te</span>,</div>
<div class="ln" style="left:470.3px;top:938.00px;transform:scaleX(1.0018)"><span>condiescit</span>, <span>consu</span> <span>mei</span> <span>trurnius</span>, nos <span>ne</span> re for intra?</div>
<div class="ln" style="left:470.3px;top:956.00px;transform:scaleX(0.9837)"><span>Ciam</span>. <span>Upiorecri</span> <span>perbis</span> re, <span>ut</span> <span>vocaedius</span>, <span>ut</span> <span>vilicae</span></div>
<div class="ln" style="left:470.3px;top:974.00px;transform:scaleX(1.0132)"><span>paturor</span> <span>teripti</span> <span>ustuid</span> con <span>tatiorum</span> me <span>adeatuus</span></div>
<div class="ln" style="left:470.3px;top:992.00px;transform:scaleX(0.9965)"><span>faceper</span> <span>cepoter</span> <span>eisquit</span>, <span>cemur</span>, <span>ut</span> <span>cre</span> <span>dium</span> <span>prarit</span>.</div>
<div class="ln" style="left:470.3px;top:1010.00px;transform:scaleX(0.9961)"><span>Foreo</span>, <span>consultust</span> is <span>nonimum</span> <span>fauctabulla</span> nos-</div>
<div class="ln" style="left:470.3px;top:1028.00px;transform:scaleX(1.0038)"><span>tasdam</span> <span>quem</span> <span>pari</span> <span>te</span> <span>atus</span> con diem <span>pri</span> <span>foremum</span></div>
<div class="ln" style="left:470.3px;top:1046.00px;transform:scaleX(1.0108)">P. <span>Soli</span>, <span>nihilla</span> <span>tat</span> et <span>vero</span> <span>utili</span>. Tam <span>latuis</span>, <span>ellarid</span></div>
</div>
<div class="mg" style="left:124px;top:171px;width:656px"></div>
<div class="pg" style="left:124px;top:172px;height:900px"></div>
<div class="pg" style="left:434px;top:172px;height:900px"></div>
<div class="pg" style="left:469px;top:172px;height:900px"></div>
<div class="pg" style="left:779px;top:172px;height:900px"></div>
<div class="bl" style="left:124px;top:239px;width:311px;height:1px"></div>
<div class="bl" style="left:469px;top:239px;width:311px;height:1px"></div>
<div class="bl" style="left:469px;top:239px;width:1px;height:830px"></div>
<div class="bl" style="left:779px;top:239px;width:1px;height:830px"></div>
<div style="left:824px;top:127px;width:1px;height:940px;background:#000"></div>
<div class="bl" style="left:869px;top:163px;width:655px;height:1px"></div>
<div class="bl" style="left:869px;top:163px;width:1px;height:9px"></div>
<div class="mg" style="left:869px;top:171px;width:655px"></div>
<div class="bl" style="left:869px;top:201px;width:655px;height:1px"></div>
<div class="bl" style="left:869px;top:239px;width:310px;height:1px"></div>
<div class="bl" style="left:1213px;top:239px;width:311px;height:1px"></div>
<div class="pg" style="left:869px;top:172px;height:900px"></div>
<div class="pg" style="left:1178px;top:172px;height:900px"></div>
<div class="pg" style="left:1213px;top:172px;height:900px"></div>
<div class="pg" style="left:1523px;top:172px;height:900px"></div>
<div style="left:297px;top:163px;width:311px;height:29px;border:1px solid #4a90ff"></div>
<div class="sq" style="left:317px;top:180px;width:269px;height:2px"></div>
<div class="hd" style="left:292px;top:158px"></div>
<div class="hd" style="left:446px;top:158px"></div>
<div class="hd" style="left:602px;top:158px"></div>
<div class="hd" style="left:292px;top:187px"></div>
<div class="hd" style="left:446px;top:187px"></div>
<div class="hd" style="left:602px;top:187px"></div>
<div class="hd" style="left:290px;top:170px;width:13px;height:13px"></div>
<div class="hd" style="left:601px;top:170px;width:13px;height:13px"></div>
<div style="left:540px;top:158px;width:11px;height:11px;background:#4a90ff"></div>
<div class="t" style="left:539.5px;top:179px;font-family:'Liberation Serif',serif;font-style:italic;font-weight:bold;font-size:24px;line-height:24px;color:#2f7fe0;transform-origin:0 0;transform:scaleX(1.22)">0</div>
<div style="left:2px;top:87px;width:1695px;height:2px;background:#363636"></div>
<div style="left:2px;top:89px;width:1673px;height:24px;background:#1e1e1e;border-bottom:1px solid #6a6a6a"></div>
<div style="left:2px;top:113px;width:20px;height:950px;background:#1e1e1e"></div>
<div style="left:2px;top:112px;width:14px;height:1px;background:#6a6a6a"></div>
<svg style="left:0;top:0" width="1697" height="113" fill="#8c8c8c"><rect x="80.00" y="89" width="1" height="23"/><rect x="87.00" y="109" width="1" height="3"/><rect x="94.00" y="109" width="1" height="3"/><rect x="101.00" y="109" width="1" height="3"/><rect x="108.00" y="109" width="1" height="3"/><rect x="115.00" y="102" width="1" height="10"/><rect x="122.00" y="109" width="1" height="3"/><rect x="129.00" y="109" width="1" height="3"/><rect x="136.00" y="109" width="1" height="3"/><rect x="143.00" y="109" width="1" height="3"/><rect x="150.00" y="89" width="1" height="23"/><rect x="157.00" y="109" width="1" height="3"/><rect x="165.00" y="109" width="1" height="3"/><rect x="172.00" y="109" width="1" height="3"/><rect x="179.00" y="109" width="1" height="3"/><rect x="186.00" y="102" width="1" height="10"/><rect x="193.00" y="109" width="1" height="3"/><rect x="200.00" y="109" width="1" height="3"/><rect x="207.00" y="109" width="1" height="3"/><rect x="214.00" y="109" width="1" height="3"/><rect x="221.00" y="89" width="1" height="23"/><rect x="228.00" y="109" width="1" height="3"/><rect x="235.00" y="109" width="1" height="3"/><rect x="242.00" y="109" width="1" height="3"/><rect x="250.00" y="109" width="1" height="3"/><rect x="257.00" y="102" width="1" height="10"/><rect x="264.00" y="109" width="1" height="3"/><rect x="271.00" y="109" width="1" height="3"/><rect x="278.00" y="109" width="1" height="3"/><rect x="285.00" y="109" width="1" height="3"/><rect x="292.00" y="89" width="1" height="23"/><rect x="299.00" y="109" width="1" height="3"/><rect x="306.00" y="109" width="1" height="3"/><rect x="313.00" y="109" width="1" height="3"/><rect x="320.00" y="109" width="1" height="3"/><rect x="328.00" y="102" width="1" height="10"/><rect x="335.00" y="109" width="1" height="3"/><rect x="342.00" y="109" width="1" height="3"/><rect x="349.00" y="109" width="1" height="3"/><rect x="356.00" y="109" width="1" height="3"/><rect x="363.00" y="89" width="1" height="23"/><rect x="370.00" y="109" width="1" height="3"/><rect x="377.00" y="109" width="1" height="3"/><rect x="384.00" y="109" width="1" height="3"/><rect x="391.00" y="109" width="1" height="3"/><rect x="398.00" y="102" width="1" height="10"/><rect x="405.00" y="109" width="1" height="3"/><rect x="413.00" y="109" width="1" height="3"/><rect x="420.00" y="109" width="1" height="3"/><rect x="427.00" y="109" width="1" height="3"/><rect x="434.00" y="89" width="1" height="23"/><rect x="441.00" y="109" width="1" height="3"/><rect x="448.00" y="109" width="1" height="3"/><rect x="455.00" y="109" width="1" height="3"/><rect x="462.00" y="109" width="1" height="3"/><rect x="469.00" y="102" width="1" height="10"/><rect x="476.00" y="109" width="1" height="3"/><rect x="483.00" y="109" width="1" height="3"/><rect x="491.00" y="109" width="1" height="3"/><rect x="498.00" y="109" width="1" height="3"/><rect x="505.00" y="89" width="1" height="23"/><rect x="512.00" y="109" width="1" height="3"/><rect x="519.00" y="109" width="1" height="3"/><rect x="526.00" y="109" width="1" height="3"/><rect x="533.00" y="109" width="1" height="3"/><rect x="540.00" y="102" width="1" height="10"/><rect x="547.00" y="109" width="1" height="3"/><rect x="554.00" y="109" width="1" height="3"/><rect x="561.00" y="109" width="1" height="3"/><rect x="568.00" y="109" width="1" height="3"/><rect x="576.00" y="89" width="1" height="23"/><rect x="583.00" y="109" width="1" height="3"/><rect x="590.00" y="109" width="1" height="3"/><rect x="597.00" y="109" width="1" height="3"/><rect x="604.00" y="109" width="1" height="3"/><rect x="611.00" y="102" width="1" height="10"/><rect x="618.00" y="109" width="1" height="3"/><rect x="625.00" y="109" width="1" height="3"/><rect x="632.00" y="109" width="1" height="3"/><rect x="639.00" y="109" width="1" height="3"/><rect x="646.00" y="89" width="1" height="23"/><rect x="654.00" y="109" width="1" height="3"/><rect x="661.00" y="109" width="1" height="3"/><rect x="668.00" y="109" width="1" height="3"/><rect x="675.00" y="109" width="1" height="3"/><rect x="682.00" y="102" width="1" height="10"/><rect x="689.00" y="109" width="1" height="3"/><rect x="696.00" y="109" width="1" height="3"/><rect x="703.00" y="109" width="1" height="3"/><rect x="710.00" y="109" width="1" height="3"/><rect x="717.00" y="89" width="1" height="23"/><rect x="724.00" y="109" width="1" height="3"/><rect x="731.00" y="109" width="1" height="3"/><rect x="739.00" y="109" width="1" height="3"/><rect x="746.00" y="109" width="1" height="3"/><rect x="753.00" y="102" width="1" height="10"/><rect x="760.00" y="109" width="1" height="3"/><rect x="767.00" y="109" width="1" height="3"/><rect x="774.00" y="109" width="1" height="3"/><rect x="781.00" y="109" width="1" height="3"/><rect x="788.00" y="89" width="1" height="23"/><rect x="795.00" y="109" width="1" height="3"/><rect x="802.00" y="109" width="1" height="3"/><rect x="809.00" y="109" width="1" height="3"/><rect x="817.00" y="109" width="1" height="3"/><rect x="824.00" y="102" width="1" height="10"/><rect x="831.00" y="109" width="1" height="3"/><rect x="838.00" y="109" width="1" height="3"/><rect x="845.00" y="109" width="1" height="3"/><rect x="852.00" y="109" width="1" height="3"/><rect x="859.00" y="89" width="1" height="23"/><rect x="866.00" y="109" width="1" height="3"/><rect x="873.00" y="109" width="1" height="3"/><rect x="880.00" y="109" width="1" height="3"/><rect x="887.00" y="109" width="1" height="3"/><rect x="894.00" y="102" width="1" height="10"/><rect x="902.00" y="109" width="1" height="3"/><rect x="909.00" y="109" width="1" height="3"/><rect x="916.00" y="109" width="1" height="3"/><rect x="923.00" y="109" width="1" height="3"/><rect x="930.00" y="89" width="1" height="23"/><rect x="937.00" y="109" width="1" height="3"/><rect x="944.00" y="109" width="1" height="3"/><rect x="951.00" y="109" width="1" height="3"/><rect x="958.00" y="109" width="1" height="3"/><rect x="965.00" y="102" width="1" height="10"/><rect x="972.00" y="109" width="1" height="3"/><rect x="979.00" y="109" width="1" height="3"/><rect x="987.00" y="109" width="1" height="3"/><rect x="994.00" y="109" width="1" height="3"/><rect x="1001.00" y="89" width="1" height="23"/><rect x="1008.00" y="109" width="1" height="3"/><rect x="1015.00" y="109" width="1" height="3"/><rect x="1022.00" y="109" width="1" height="3"/><rect x="1029.00" y="109" width="1" height="3"/><rect x="1036.00" y="102" width="1" height="10"/><rect x="1043.00" y="109" width="1" height="3"/><rect x="1050.00" y="109" width="1" height="3"/><rect x="1057.00" y="109" width="1" height="3"/><rect x="1065.00" y="109" width="1" height="3"/><rect x="1072.00" y="89" width="1" height="23"/><rect x="1079.00" y="109" width="1" height="3"/><rect x="1086.00" y="109" width="1" height="3"/><rect x="1093.00" y="109" width="1" height="3"/><rect x="1100.00" y="109" width="1" height="3"/><rect x="1107.00" y="102" width="1" height="10"/><rect x="1114.00" y="109" width="1" height="3"/><rect x="1121.00" y="109" width="1" height="3"/><rect x="1128.00" y="109" width="1" height="3"/><rect x="1135.00" y="109" width="1" height="3"/><rect x="1142.00" y="89" width="1" height="23"/><rect x="1150.00" y="109" width="1" height="3"/><rect x="1157.00" y="109" width="1" height="3"/><rect x="1164.00" y="109" width="1" height="3"/><rect x="1171.00" y="109" width="1" height="3"/><rect x="1178.00" y="102" width="1" height="10"/><rect x="1185.00" y="109" width="1" height="3"/><rect x="1192.00" y="109" width="1" height="3"/><rect x="1199.00" y="109" width="1" height="3"/><rect x="1206.00" y="109" width="1" height="3"/><rect x="1213.00" y="89" width="1" height="23"/><rect x="1220.00" y="109" width="1" height="3"/><rect x="1228.00" y="109" width="1" height="3"/><rect x="1235.00" y="109" width="1" height="3"/><rect x="1242.00" y="109" width="1" height="3"/><rect x="1249.00" y="102" width="1" height="10"/><rect x="1256.00" y="109" width="1" height="3"/><rect x="1263.00" y="109" width="1" height="3"/><rect x="1270.00" y="109" width="1" height="3"/><rect x="1277.00" y="109" width="1" height="3"/><rect x="1284.00" y="89" width="1" height="23"/><rect x="1291.00" y="109" width="1" height="3"/><rect x="1298.00" y="109" width="1" height="3"/><rect x="1305.00" y="109" width="1" height="3"/><rect x="1313.00" y="109" width="1" height="3"/><rect x="1320.00" y="102" width="1" height="10"/><rect x="1327.00" y="109" width="1" height="3"/><rect x="1334.00" y="109" width="1" height="3"/><rect x="1341.00" y="109" width="1" height="3"/><rect x="1348.00" y="109" width="1" height="3"/><rect x="1355.00" y="89" width="1" height="23"/><rect x="1362.00" y="109" width="1" height="3"/><rect x="1369.00" y="109" width="1" height="3"/><rect x="1376.00" y="109" width="1" height="3"/><rect x="1383.00" y="109" width="1" height="3"/><rect x="1391.00" y="102" width="1" height="10"/><rect x="1398.00" y="109" width="1" height="3"/><rect x="1405.00" y="109" width="1" height="3"/><rect x="1412.00" y="109" width="1" height="3"/><rect x="1419.00" y="109" width="1" height="3"/><rect x="1426.00" y="89" width="1" height="23"/><rect x="1433.00" y="109" width="1" height="3"/><rect x="1440.00" y="109" width="1" height="3"/><rect x="1447.00" y="109" width="1" height="3"/><rect x="1454.00" y="109" width="1" height="3"/><rect x="1461.00" y="102" width="1" height="10"/><rect x="1468.00" y="109" width="1" height="3"/><rect x="1476.00" y="109" width="1" height="3"/><rect x="1483.00" y="109" width="1" height="3"/><rect x="1490.00" y="109" width="1" height="3"/><rect x="1497.00" y="89" width="1" height="23"/><rect x="1504.00" y="109" width="1" height="3"/><rect x="1511.00" y="109" width="1" height="3"/><rect x="1518.00" y="109" width="1" height="3"/><rect x="1525.00" y="109" width="1" height="3"/><rect x="1532.00" y="102" width="1" height="10"/><rect x="1539.00" y="109" width="1" height="3"/><rect x="1546.00" y="109" width="1" height="3"/><rect x="1554.00" y="109" width="1" height="3"/><rect x="1561.00" y="109" width="1" height="3"/><rect x="1568.00" y="89" width="1" height="23"/><rect x="1575.00" y="109" width="1" height="3"/><rect x="1582.00" y="109" width="1" height="3"/><rect x="1589.00" y="109" width="1" height="3"/><rect x="1596.00" y="109" width="1" height="3"/><rect x="1603.00" y="102" width="1" height="10"/><rect x="1610.00" y="109" width="1" height="3"/><rect x="1617.00" y="109" width="1" height="3"/><rect x="1624.00" y="109" width="1" height="3"/><rect x="1631.00" y="109" width="1" height="3"/><rect x="1639.00" y="89" width="1" height="23"/><rect x="1646.00" y="109" width="1" height="3"/><rect x="1653.00" y="109" width="1" height="3"/><rect x="1660.00" y="109" width="1" height="3"/><rect x="1667.00" y="109" width="1" height="3"/><rect x="1674.00" y="102" width="1" height="10"/></svg>
<div class="t rl" style="left:82.5px;top:91px">0</div>
<div class="t rl" style="left:153.4px;top:91px">20</div>
<div class="t rl" style="left:224.2px;top:91px">40</div>
<div class="t rl" style="left:295.1px;top:91px">60</div>
<div class="t rl" style="left:366.0px;top:91px">80</div>
<div class="t rl" style="left:436.8px;top:91px">100</div>
<div class="t rl" style="left:507.7px;top:91px">120</div>
<div class="t rl" style="left:578.6px;top:91px">140</div>
<div class="t rl" style="left:649.4px;top:91px">160</div>
<div class="t rl" style="left:720.3px;top:91px">180</div>
<div class="t rl" style="left:791.2px;top:91px">200</div>
<div class="t rl" style="left:862.0px;top:91px">220</div>
<div class="t rl" style="left:932.9px;top:91px">240</div>
<div class="t rl" style="left:1003.8px;top:91px">260</div>
<div class="t rl" style="left:1074.6px;top:91px">280</div>
<div class="t rl" style="left:1145.5px;top:91px">300</div>
<div class="t rl" style="left:1216.4px;top:91px">320</div>
<div class="t rl" style="left:1287.2px;top:91px">340</div>
<div class="t rl" style="left:1358.1px;top:91px">360</div>
<div class="t rl" style="left:1429.0px;top:91px">380</div>
<div class="t rl" style="left:1499.8px;top:91px">400</div>
<div class="t rl" style="left:1570.7px;top:91px">420</div>
<div class="t rl" style="left:1641.6px;top:91px">440</div>
<svg style="left:0;top:0" width="22" height="1053" fill="#8c8c8c"><rect x="2" y="126" width="14" height="1"/><rect x="2" y="197" width="14" height="1"/><rect x="2" y="268" width="14" height="1"/><rect x="2" y="339" width="14" height="1"/><rect x="2" y="410" width="14" height="1"/><rect x="2" y="481" width="14" height="1"/><rect x="2" y="552" width="14" height="1"/><rect x="2" y="623" width="14" height="1"/><rect x="2" y="693" width="14" height="1"/><rect x="2" y="764" width="14" height="1"/><rect x="2" y="835" width="14" height="1"/><rect x="2" y="906" width="14" height="1"/><rect x="2" y="977" width="14" height="1"/><rect x="2" y="1048" width="14" height="1"/></svg>
<div class="t rl" style="left:4px;top:128.2px;width:10px;text-align:center">0</div>
<div class="t rl" style="left:4px;top:199.1px;width:10px;text-align:center">2</div>
<div class="t rl" style="left:4px;top:211.7px;width:10px;text-align:center">0</div>
<div class="t rl" style="left:4px;top:269.9px;width:10px;text-align:center">4</div>
<div class="t rl" style="left:4px;top:282.5px;width:10px;text-align:center">0</div>
<div class="t rl" style="left:4px;top:340.8px;width:10px;text-align:center">6</div>
<div class="t rl" style="left:4px;top:353.4px;width:10px;text-align:center">0</div>
<div class="t rl" style="left:4px;top:411.7px;width:10px;text-align:center">8</div>
<div class="t rl" style="left:4px;top:424.3px;width:10px;text-align:center">0</div>
<div class="t rl" style="left:4px;top:482.5px;width:10px;text-align:center">1</div>
<div class="t rl" style="left:4px;top:495.1px;width:10px;text-align:center">0</div>
<div class="t rl" style="left:4px;top:507.7px;width:10px;text-align:center">0</div>
<div class="t rl" style="left:4px;top:553.4px;width:10px;text-align:center">1</div>
<div class="t rl" style="left:4px;top:566.0px;width:10px;text-align:center">2</div>
<div class="t rl" style="left:4px;top:578.6px;width:10px;text-align:center">0</div>
<div class="t rl" style="left:4px;top:624.3px;width:10px;text-align:center">1</div>
<div class="t rl" style="left:4px;top:636.9px;width:10px;text-align:center">4</div>
<div class="t rl" style="left:4px;top:649.5px;width:10px;text-align:center">0</div>
<div class="t rl" style="left:4px;top:695.1px;width:10px;text-align:center">1</div>
<div class="t rl" style="left:4px;top:707.7px;width:10px;text-align:center">6</div>
<div class="t rl" style="left:4px;top:720.3px;width:10px;text-align:center">0</div>
<div class="t rl" style="left:4px;top:766.0px;width:10px;text-align:center">1</div>
<div class="t rl" style="left:4px;top:778.6px;width:10px;text-align:center">8</div>
<div class="t rl" style="left:4px;top:791.2px;width:10px;text-align:center">0</div>
<div class="t rl" style="left:4px;top:836.9px;width:10px;text-align:center">2</div>
<div class="t rl" style="left:4px;top:849.5px;width:10px;text-align:center">0</div>
<div class="t rl" style="left:4px;top:862.1px;width:10px;text-align:center">0</div>
<div class="t rl" style="left:4px;top:907.7px;width:10px;text-align:center">2</div>
<div class="t rl" style="left:4px;top:920.3px;width:10px;text-align:center">2</div>
<div class="t rl" style="left:4px;top:932.9px;width:10px;text-align:center">0</div>
<div class="t rl" style="left:4px;top:978.6px;width:10px;text-align:center">2</div>
<div class="t rl" style="left:4px;top:991.2px;width:10px;text-align:center">4</div>
<div class="t rl" style="left:4px;top:1003.8px;width:10px;text-align:center">0</div>
<div class="t rl" style="left:4px;top:1049.5px;width:10px;text-align:center">2</div>
<div class="t rl" style="left:4px;top:1062.1px;width:10px;text-align:center">6</div>
<div class="t rl" style="left:4px;top:1074.7px;width:10px;text-align:center">0</div>
<div style="left:8px;top:90px;width:0;height:22px;border-left:1px dotted #9a9a9a"></div>
<div style="left:2px;top:95px;width:20px;height:0;border-top:1px dotted #9a9a9a"></div>
<div style="left:1675px;top:88px;width:22px;height:965px;background:#4d4d4d"></div>
<svg style="left:1679px;top:92px" width="14" height="10" fill="none" stroke="#777" stroke-width="1.3"><path d="M1 8 L7 2 L13 8"/></svg>
<svg style="left:1680px;top:1041px" width="10" height="6" fill="none" stroke="#8a8a8a" stroke-width="1.1"><path d="M1 1 L5 4.8 L9 1"/></svg>
</div>
<div style="left:0;top:0;width:1920px;height:44px;background:#535353"></div>
<div style="left:0;top:44px;width:1920px;height:2px;background:#383838"></div>
<div style="left:809px;top:0;width:60px;height:1px;background:#5aa7ea"></div>
<div style="left:869px;top:0;width:241px;height:1px;background:#e8e8e8"></div>
<div style="left:17px;top:7px;width:28px;height:27px;border-radius:5px;background:#49021f"></div>
<div class="t " style="left:23.50px;top:10.35px;font-size:18px;line-height:22px;transform-origin:0 0;transform:scaleX(0.9690);font-weight:bold;color:#ff3366;">Id</div>
<svg style="left:72px;top:10px" width="30" height="26" viewBox="0 0 30 26"><path d="M15 1 L1.5 14 L1.5 15.5 L5 15.5 L5 24 L12 24 L12 16 L18 16 L18 24 L25 24 L25 15.5 L28.5 15.5 L28.5 14 Z" fill="#c2c2c2" stroke="#c2c2c2" stroke-width="1" stroke-linejoin="round"/></svg>
<div class="t " style="left:133.50px;top:11.52px;font-size:17.5px;line-height:21px;transform-origin:0 0;transform:scaleX(0.9043);color:#ececec;">File</div>
<div class="t " style="left:186.50px;top:11.52px;font-size:17.5px;line-height:21px;transform-origin:0 0;transform:scaleX(0.9617);color:#ececec;">Edit</div>
<div class="t " style="left:241.50px;top:11.52px;font-size:17.5px;line-height:21px;transform-origin:0 0;transform:scaleX(1.0182);color:#ececec;">Layout</div>
<div class="t " style="left:321.00px;top:11.52px;font-size:17.5px;line-height:21px;transform-origin:0 0;transform:scaleX(1.0016);color:#ececec;">Type</div>
<div class="t " style="left:385.00px;top:11.52px;font-size:17.5px;line-height:21px;transform-origin:0 0;transform:scaleX(1.0281);color:#ececec;">Object</div>
<div class="t " style="left:463.00px;top:11.52px;font-size:17.5px;line-height:21px;transform-origin:0 0;transform:scaleX(1.0039);color:#ececec;">Table</div>
<div class="t " style="left:532.00px;top:11.52px;font-size:17.5px;line-height:21px;transform-origin:0 0;transform:scaleX(0.9836);color:#ececec;">View</div>
<div class="t " style="left:597.00px;top:11.52px;font-size:17.5px;line-height:21px;transform-origin:0 0;transform:scaleX(1.0604);color:#ececec;">Window</div>
<div class="t " style="left:688.50px;top:11.52px;font-size:17.5px;line-height:21px;transform-origin:0 0;transform:scaleX(0.9863);color:#ececec;">Help</div>
<svg style="left:1338px;top:6px" width="28" height="29" viewBox="0 0 28 29" fill="none" stroke="#cfcfcf" stroke-width="2.2"><path d="M8 12 L3 12 L3 26 L24 26 L24 12 L19 12"/><path d="M13.5 19 L13.5 4"/><path d="M8.5 8.5 L13.5 3.5 L18.5 8.5" stroke-linejoin="miter"/></svg>
<div style="left:1387px;top:7px;width:2px;height:29px;background:#5f5f5f"></div>
<div style="left:1527px;top:7px;width:2px;height:29px;background:#5f5f5f"></div>
<div class="t " style="left:1407.50px;top:10.22px;font-size:17.5px;line-height:21px;transform-origin:0 0;transform:scaleX(0.9215);color:#e4e4e4;">Essentials</div>
<svg style="left:1495px;top:16px" width="14" height="11" fill="none" stroke="#e0e0e0" stroke-width="1.8"><path d="M2 2.5 L7 8 L12 2.5"/></svg>
<div style="left:1542px;top:5px;width:195px;height:30px;border:1px solid #6d6d6d;border-radius:4px;background:#464646"></div>
<svg style="left:1547px;top:10px" width="32" height="20" fill="none" stroke="#d6d6d6" stroke-width="1.7"><circle cx="8.5" cy="8" r="5.2"/><path d="M12.3 12 L17 17.5" stroke-width="2.2"/><path d="M18.5 7 L23 11.5 L27.5 7" stroke-width="1.5"/></svg>
<div class="t " style="left:1580.50px;top:10.35px;font-size:16.5px;line-height:20px;transform-origin:0 0;transform:scaleX(0.8657);color:#8e8e8e;">Adobe Stock</div>
<div style="left:1761px;top:-4px;width:154px;height:31px;border:1px solid #656565;border-radius:6px"></div>
<div style="left:1803px;top:0;width:1px;height:26px;background:#606060"></div>
<div style="left:1843px;top:0;width:1px;height:26px;background:#606060"></div>
<div style="left:1775px;top:15px;width:15px;height:3px;background:#c9c9c9"></div>
<svg style="left:1814px;top:5px" width="20" height="17" fill="none" stroke="#c9c9c9" stroke-width="2"><rect x="5.5" y="1.5" width="12" height="8"/><rect x="1.5" y="6" width="11.5" height="8.5" fill="#535353"/></svg>
<svg style="left:1872px;top:5px" width="18" height="16" fill="none" stroke="#d0d0d0" stroke-width="2.3"><path d="M2 1.5 L16 14.5 M16 1.5 L2 14.5"/></svg>
<div style="left:0;top:46px;width:1697px;height:41px;background:#424242"></div>
<div style="left:0;top:46px;width:2px;height:1034px;background:#383838"></div>
<div style="left:2px;top:46px;width:211px;height:41px;background:#535353"></div>
<div class="t " style="left:23.00px;top:59.51px;font-size:16px;line-height:19px;transform-origin:0 0;transform:scaleX(1.0365);font-weight:bold;color:#f2f2f2;">*Untitled-1 @ 75%</div>
<svg style="left:178px;top:60px" width="13" height="13" fill="none" stroke="#f0f0f0" stroke-width="1.6"><path d="M2 2 L11 11 M11 2 L2 11"/></svg>
<div style="left:1697px;top:46px;width:223px;height:1034px;background:#383838"></div>
<div style="left:1700px;top:46px;width:58px;height:16px;background:#424242"></div>
<div style="left:1758px;top:46px;width:162px;height:16px;background:#424242"></div>
<div style="left:1700px;top:63px;width:58px;height:58px;background:#535353"></div>
<div style="left:1700px;top:123px;width:58px;height:957px;background:#535353"></div>
<div style="left:1761px;top:63px;width:159px;height:61px;background:#535353"></div>
<div style="left:1761px;top:126px;width:159px;height:101px;background:#535353"></div>
<div style="left:1761px;top:229px;width:159px;height:851px;background:#535353"></div>
<svg style="left:1737px;top:49px" width="12" height="9" fill="none" stroke="#d8d8d8" stroke-width="1.3"><path d="M4.5 1 L1.2 4.5 L4.5 8 M10 1 L6.7 4.5 L10 8"/></svg>
<svg style="left:1899px;top:49px" width="12" height="9" fill="none" stroke="#d8d8d8" stroke-width="1.3"><path d="M4.5 1 L1.2 4.5 L4.5 8 M10 1 L6.7 4.5 L10 8"/></svg>
<svg style="left:1716px;top:68px" width="30" height="6" fill="#3e3e3e"><rect x="0" y="0" width="1" height="6"/><rect x="3" y="0" width="1" height="6"/><rect x="6" y="0" width="1" height="6"/><rect x="9" y="0" width="1" height="6"/><rect x="12" y="0" width="1" height="6"/><rect x="15" y="0" width="1" height="6"/><rect x="18" y="0" width="1" height="6"/><rect x="21" y="0" width="1" height="6"/><rect x="24" y="0" width="1" height="6"/><rect x="27" y="0" width="1" height="6"/></svg>
<svg style="left:1826px;top:68px" width="30" height="6" fill="#3e3e3e"><rect x="0" y="0" width="1" height="6"/><rect x="3" y="0" width="1" height="6"/><rect x="6" y="0" width="1" height="6"/><rect x="9" y="0" width="1" height="6"/><rect x="12" y="0" width="1" height="6"/><rect x="15" y="0" width="1" height="6"/><rect x="18" y="0" width="1" height="6"/><rect x="21" y="0" width="1" height="6"/><rect x="24" y="0" width="1" height="6"/><rect x="27" y="0" width="1" height="6"/></svg>
<svg style="left:1826px;top:130px" width="30" height="6" fill="#3e3e3e"><rect x="0" y="0" width="1" height="6"/><rect x="3" y="0" width="1" height="6"/><rect x="6" y="0" width="1" height="6"/><rect x="9" y="0" width="1" height="6"/><rect x="12" y="0" width="1" height="6"/><rect x="15" y="0" width="1" height="6"/><rect x="18" y="0" width="1" height="6"/><rect x="21" y="0" width="1" height="6"/><rect x="24" y="0" width="1" height="6"/><rect x="27" y="0" width="1" height="6"/></svg>
<svg style="left:1717px;top:85px" width="30" height="30" viewBox="0 0 30 30"><path d="M15 9.5 L28 16.5 L15 23.5 L2 16.5 Z" fill="#c4c4c4" transform="translate(0,4)"/><path d="M15 1.5 L29 9.5 L15 17.5 L1 9.5 Z" fill="#c4c4c4" stroke="#535353" stroke-width="1.6"/></svg>
<svg style="left:1777px;top:84px" width="30" height="30" viewBox="0 0 30 30" fill="none" stroke="#c4c4c4" stroke-width="1.4"><path d="M10 1.5 L18 5 L18 14 L10 18 L2 14 L2 5 Z"/><path d="M2 5 L10 8.8 L18 5 M10 8.8 L10 18"/><rect x="21.5" y="2" width="6" height="6" fill="#c4c4c4" stroke="none"/><rect x="21.5" y="11" width="6" height="6" fill="#c4c4c4" stroke="none"/><rect x="1.5" y="22" width="26.5" height="6" fill="#c4c4c4" stroke="none"/><path d="M22 23.8 L27 23.8 L24.5 27 Z" fill="#535353" stroke="none"/></svg>
<div class="t " style="left:1818.50px;top:90.71px;font-size:16px;line-height:19px;transform-origin:0 0;transform:scaleX(0.9842);font-weight:bold;color:#f4f4f4;">Properti...</div>
<div style="left:1768px;top:142px;width:145px;height:35px;border:1px solid #5a5a5a;border-radius:4px;background:#383838"></div>
<svg style="left:1778px;top:146px" width="28" height="30" viewBox="0 0 28 30"><path d="M1 13 L1 26 L12 26 L12 7 L7 7 Z M7 7 L7 13 L1 13" fill="#c4c4c4"/><path d="M27 13 L27 26 L16 26 L16 7 L21 7 Z" fill="#c4c4c4"/><path d="M1.5 12.5 L6.5 7.5 L6.5 12.5 Z" fill="#8a8a8a"/><path d="M26.5 12.5 L21.5 7.5 L21.5 12.5 Z" fill="#8a8a8a"/><rect x="13.2" y="1" width="1.6" height="29" fill="#c4c4c4"/></svg>
<div class="t " style="left:1818.50px;top:152.01px;font-size:16px;line-height:19px;transform-origin:0 0;transform:scaleX(0.9546);font-weight:bold;color:#f4f4f4;">Pages</div>
<svg style="left:1778px;top:193px" width="26" height="19" viewBox="0 0 26 19"><rect x="0" y="0" width="26" height="19" fill="#c4c4c4"/><g fill="#868686"><rect x="3" y="3" width="5" height="5"/><rect x="17.5" y="3" width="5" height="5"/><rect x="10.5" y="10.5" width="5" height="5"/></g><g fill="#a6a6a6"><rect x="10.5" y="3" width="5" height="5"/><rect x="3" y="10.5" width="5" height="5"/><rect x="17.5" y="10.5" width="5" height="5"/></g></svg>
<div class="t " style="left:1818.50px;top:193.81px;font-size:16px;line-height:19px;transform-origin:0 0;transform:scaleX(0.9619);font-weight:bold;color:#f4f4f4;">Swatches</div>
<div style="left:0;top:1053px;width:1697px;height:24px;background:#535353;border-top:1px solid #454545"></div>
<svg style="left:86.0px;top:1060.0px" width="13" height="10" fill="none" stroke="#d6d6d6" stroke-width="1.25"><path d="M1.5 2 L6.5 8 L11.5 2"/></svg>
<svg style="left:116px;top:1058px" width="16" height="15" fill="#c6c6c6"><rect x="1" y="1" width="2.6" height="13"/><path d="M14 1 L14 14 L5 7.5 Z"/></svg>
<svg style="left:149px;top:1058px" width="10" height="15" fill="#c6c6c6"><path d="M9 1 L9 14 L1 7.5 Z"/></svg>
<div style="left:177px;top:1054px;width:135px;height:23px;border:1px solid #626262;border-radius:3px;background:#454545"></div>
<div style="left:284px;top:1055px;width:1px;height:21px;background:#626262"></div>
<div class="t " style="left:182.50px;top:1056.71px;font-size:16px;line-height:19px;transform-origin:0 0;transform:scaleX(0.9552);color:#f0f0f0;">3</div>
<svg style="left:291.0px;top:1060.0px" width="14" height="10" fill="none" stroke="#d6d6d6" stroke-width="1.25"><path d="M1.5 2 L7 8 L12.5 2"/></svg>
<svg style="left:331px;top:1058px" width="10" height="15" fill="#c6c6c6"><path d="M1 1 L1 14 L9 7.5 Z"/></svg>
<svg style="left:359px;top:1058px" width="16" height="15" fill="#c6c6c6"><path d="M1.5 1 L1.5 14 L10.5 7.5 Z"/><rect x="11.5" y="1" width="2.6" height="13"/></svg>
<svg style="left:396px;top:1053px" width="34" height="26" viewBox="396 1053 34 26"><circle cx="408.4" cy="1065.5" r="10.2" fill="#c6c6c6"/><path d="M403.1 1077 L403.1 1061.1 L408.9 1061.1 L408.9 1066.1 L415 1066.1 L415 1077 Z" fill="#535353"/><path d="M410.8 1062.2 L414 1065 L410.8 1065 Z" fill="#535353"/><path d="M419.5 1071 L425.5 1071 L422.5 1074.8 Z" fill="#c6c6c6"/></svg>
<div class="t " style="left:446.00px;top:1056.05px;font-size:16.5px;line-height:20px;transform-origin:0 0;transform:scaleX(0.9430);color:#ececec;">[Basic] (working)</div>
<svg style="left:599.0px;top:1060.0px" width="14" height="10" fill="none" stroke="#d6d6d6" stroke-width="1.25"><path d="M1.5 2 L7 8 L12.5 2"/></svg>
<div style="left:633.5px;top:1056.5px;width:17px;height:17px;border-radius:50%;background:#43ad49"></div>
<div class="t " style="left:659.00px;top:1056.05px;font-size:16.5px;line-height:20px;transform-origin:0 0;transform:scaleX(0.9161);color:#ececec;">No errors</div>
<svg style="left:753.0px;top:1061.0px" width="14" height="10" fill="none" stroke="#d6d6d6" stroke-width="1.25"><path d="M1.5 2 L7 8 L12.5 2"/></svg>
<div style="left:773px;top:1053px;width:868px;height:24px;background:#494949"></div>
<div style="left:988px;top:1054.5px;width:452px;height:23px;border-radius:11.5px;background:#696969"></div>
<svg style="left:781px;top:1059px" width="9" height="14" fill="none" stroke="#7c7c7c" stroke-width="1.4"><path d="M7.5 1 L1.5 7 L7.5 13"/></svg>
<svg style="left:1623px;top:1059px" width="9" height="14" fill="none" stroke="#7c7c7c" stroke-width="1.4"><path d="M1.5 1 L7.5 7 L1.5 13"/></svg>
<div style="left:1641px;top:1053px;width:56px;height:24px;background:#4d4d4d"></div>
<svg style="left:1648px;top:1057px" width="26" height="18" fill="none" stroke="#c8c8c8" stroke-width="1.6"><rect x="1" y="1" width="23" height="15.5"/><path d="M12.5 1 L12.5 16.5"/></svg>
<svg style="left:1680px;top:1063px" width="16" height="14" fill="#6c6c6c"><rect x="13" y="11" width="1.5" height="1.5"/><rect x="10" y="11" width="1.5" height="1.5"/><rect x="7" y="11" width="1.5" height="1.5"/><rect x="4" y="11" width="1.5" height="1.5"/><rect x="13" y="8" width="1.5" height="1.5"/><rect x="10" y="8" width="1.5" height="1.5"/><rect x="7" y="8" width="1.5" height="1.5"/><rect x="13" y="5" width="1.5" height="1.5"/><rect x="10" y="5" width="1.5" height="1.5"/><rect x="13" y="2" width="1.5" height="1.5"/></svg>
<div style="left:0;top:1077px;width:1920px;height:1px;background:#454545"></div>
<div style="left:0;top:1078px;width:1920px;height:2px;background:#ebebeb"></div>
<div style="left:16px;top:96px;width:59px;height:19px;background:#464646;border-radius:6px 6px 0 0"></div>
<div style="left:16px;top:114px;width:59px;height:1px;background:#3c3c3c"></div>
<div style="left:16px;top:115px;width:59px;height:962px;background:#535353"></div>
<div style="left:74px;top:115px;width:1px;height:962px;background:#4a4a4a"></div>
<div style="left:75px;top:1053px;width:2px;height:24px;background:#4a4a4a"></div>
<svg style="left:0;top:0" width="80" height="1080" viewBox="0 0 80 1080"><path d="M30.5 102.5 L34 106 L30.5 109.5 M36 102.5 L39.5 106 L36 109.5" fill="none" stroke="#d0d0d0" stroke-width="1.3"/><path d="M56.5 101.5 L64.5 110 M64.5 101.5 L56.5 110" fill="none" stroke="#d8d8d8" stroke-width="1.7"/><rect x="30.5" y="121" width="1" height="6" fill="#3e3e3e"/><rect x="33.5" y="121" width="1" height="6" fill="#3e3e3e"/><rect x="36.6" y="121" width="1" height="6" fill="#3e3e3e"/><rect x="39.6" y="121" width="1" height="6" fill="#3e3e3e"/><rect x="42.7" y="121" width="1" height="6" fill="#3e3e3e"/><rect x="45.8" y="121" width="1" height="6" fill="#3e3e3e"/><rect x="48.8" y="121" width="1" height="6" fill="#3e3e3e"/><rect x="51.8" y="121" width="1" height="6" fill="#3e3e3e"/><rect x="54.9" y="121" width="1" height="6" fill="#3e3e3e"/><rect x="58.0" y="121" width="1" height="6" fill="#3e3e3e"/><rect x="25" y="140" width="41.5" height="32" rx="3" fill="#333"/><path d="M38.7 145.3 L38.7 167.5 L45.3 160.8 L54.8 160.8 Z" fill="none" stroke="#c4c4c4" stroke-width="1.5" stroke-linejoin="miter"/><path d="M38 180.5 L38 205.5 L45.5 197.2 L56.2 197.2 Z" fill="#c4c4c4"/><path d="M36.8 214 L46.5 214 L52.2 220 L52.2 229 M46 236.8 L36.8 236.8 L36.8 214 M46.5 214 L46.5 220 L52.2 220" fill="none" stroke="#c4c4c4" stroke-width="1.5"/><path d="M50 227 L50 241 L53.5 237 L58.8 237 Z" fill="#c4c4c4"/><path d="M33.2 251 L33.2 275 M57.6 251 L57.6 275" stroke="#c4c4c4" stroke-width="2.2" fill="none"/><path d="M37.5 263 L53.5 263" stroke="#c4c4c4" stroke-width="1.8" fill="none"/><path d="M41.5 258.5 L37 263 L41.5 267.5 M49.5 258.5 L54 263 L49.5 267.5" stroke="#c4c4c4" stroke-width="1.8" fill="none"/><path d="M36.3 300 L36.3 312.8 L54.2 312.8 L54.2 300" fill="none" stroke="#c4c4c4" stroke-width="2.6"/><rect x="39.5" y="303.5" width="3" height="2.6" fill="#c4c4c4"/><rect x="44.2" y="303.5" width="3" height="2.6" fill="#c4c4c4"/><rect x="49" y="300" width="3" height="2.6" fill="#c4c4c4"/><rect x="39.5" y="307.5" width="12.5" height="3" fill="#c4c4c4"/><path d="M39 288.5 L46 295.5 M46.8 289.5 L46.8 296.3 L40 296.3" fill="none" stroke="#c4c4c4" stroke-width="2"/><path d="M65.0 310.0 L65.0 315.5 L59.5 315.5 Z" fill="#c4c4c4"/><path d="M35.5 330.5 L55 330.5 L55 336 L53.3 336 L53.3 333.3 L47 333.3 L47 348 L51 348 L51 350.5 L39.5 350.5 L39.5 348 L43.5 348 L43.5 333.3 L37.2 333.3 L37.2 336 L35.5 336 Z" fill="#c4c4c4"/><path d="M65.0 346.5 L65.0 352.0 L59.5 352.0 Z" fill="#c4c4c4"/><path d="M35.5 386.5 L56 366" stroke="#c4c4c4" stroke-width="1.8" fill="none"/><g transform="translate(45.5,413) rotate(45)" fill="#c4c4c4"><path d="M-4.6 -14.5 L4.6 -14.5 L4.6 -10.2 L-4.6 -10.2 Z"/><path d="M-4.6 -8.6 L4.6 -8.6 L6.2 1.5 L0.6 13.5 L0.6 3.2 A2 2 0 1 0 -0.6 3.2 L-0.6 13.5 L-6.2 1.5 Z"/></g><path d="M65.0 419.5 L65.0 425.0 L59.5 425.0 Z" fill="#c4c4c4"/><g transform="translate(45.5,449) rotate(45)" fill="#c4c4c4"><path d="M-4 -15 L4 -15 L4 -11.5 L-4 -11.5 Z"/><path d="M-4 -10 L4 -10 L4 6.5 L0 15 L-4 6.5 Z"/></g><path d="M65.0 455.5 L65.0 461.0 L59.5 461.0 Z" fill="#c4c4c4"/><path d="M33.7 474 L56.7 474 L56.7 496.3 L33.7 496.3 Z M33.7 474 L56.7 496.3 M56.7 474 L33.7 496.3" fill="none" stroke="#c4c4c4" stroke-width="1.5"/><path d="M65.0 491.5 L65.0 497.0 L59.5 497.0 Z" fill="#c4c4c4"/><rect x="33.7" y="510" width="23" height="22.3" fill="#6e6e6e" stroke="#c4c4c4" stroke-width="1.5"/><path d="M65.0 527.5 L65.0 533.0 L59.5 533.0 Z" fill="#c4c4c4"/><path d="M34 548.5 L52.5 566 M34 566.5 L52 550.5" stroke="#c4c4c4" stroke-width="2.4" fill="none"/><circle cx="54.7" cy="552.7" r="3.4" fill="none" stroke="#c4c4c4" stroke-width="1.8"/><circle cx="54.7" cy="567.3" r="3.4" fill="none" stroke="#c4c4c4" stroke-width="1.8"/><path d="M38.5 590.5 A10.5 10.5 0 0 1 57 597.5" fill="none" stroke="#c4c4c4" stroke-width="1.9"/><path d="M35 591.8 L42 586 L42.5 594 Z" fill="#c4c4c4"/><path d="M57 599 A10.5 10.5 0 0 1 36 600" fill="none" stroke="#c4c4c4" stroke-width="1.6" stroke-dasharray="1.4 2.2"/><path d="M65.0 603.5 L65.0 609.0 L59.5 609.0 Z" fill="#c4c4c4"/><defs><linearGradient id="g1" x1="0" y1="0" x2="1" y2="0.6"><stop offset="0" stop-color="#c9c9c9"/><stop offset="1" stop-color="#5a5a5a"/></linearGradient><linearGradient id="g2" x1="0" y1="0" x2="0" y2="1"><stop offset="0" stop-color="#8a8a8a"/><stop offset="1" stop-color="#bdbdbd"/></linearGradient></defs><rect x="33.7" y="623.5" width="23" height="20.5" fill="url(#g1)" stroke="#c4c4c4" stroke-width="1.5"/><rect x="33" y="659" width="24.5" height="21.5" fill="url(#g2)"/><rect x="33.2" y="659.5" width="4" height="4" fill="#5f5f5f" opacity="0.90"/><rect x="41.3" y="659.5" width="4" height="4" fill="#5f5f5f" opacity="0.90"/><rect x="49.4" y="659.5" width="4" height="4" fill="#5f5f5f" opacity="0.90"/><rect x="37.2" y="663.5" width="4" height="4" fill="#5f5f5f" opacity="0.65"/><rect x="45.4" y="663.5" width="4" height="4" fill="#5f5f5f" opacity="0.65"/><rect x="53.5" y="663.5" width="4" height="4" fill="#5f5f5f" opacity="0.65"/><rect x="33.2" y="667.5" width="4" height="4" fill="#5f5f5f" opacity="0.40"/><rect x="41.3" y="667.5" width="4" height="4" fill="#5f5f5f" opacity="0.40"/><rect x="49.4" y="667.5" width="4" height="4" fill="#5f5f5f" opacity="0.40"/><path d="M35.5 699 L56 699 L56 714 L50.5 720.5 L35.5 720.5 Z" fill="#c4c4c4"/><path d="M39 704 L52.5 704 M39 708.3 L52.5 708.3 M39 712.6 L47.5 712.6" stroke="#535353" stroke-width="1.5" fill="none"/><path d="M51 715 L56 715 L51 720.5 Z" fill="#535353"/><g transform="translate(45.5,746) rotate(45)"><path d="M-3.6 -15 L3.6 -15 L3.6 -8 L-3.6 -8 Z" fill="#c4c4c4"/><rect x="-5.3" y="-8.3" width="10.6" height="2.5" fill="#c4c4c4"/><path d="M-2.8 -5.8 L2.8 -5.8 L2.8 9 L0 14 L-2.8 9 Z" fill="none" stroke="#c4c4c4" stroke-width="1.7"/></g><path d="M65.0 752.0 L65.0 757.5 L59.5 757.5 Z" fill="#c4c4c4"/><path d="M37.2 786 L34 779.5 Q33.3 777.2 35.2 776.8 Q36.6 776.6 37.6 778.4 L39.3 781.2 L38.8 772 Q38.8 770.2 40.3 770.2 Q41.7 770.2 41.9 772 L42.8 778 L43.2 769.6 Q43.3 768 44.8 768 Q46.3 768 46.4 769.6 L46.8 778 L48.2 771 Q48.5 769.5 49.9 769.7 Q51.3 770 51.2 771.6 L50.6 779.2 L52.6 774.8 Q53.3 773.5 54.6 774 Q55.8 774.6 55.4 776 L52.6 785 Q51.5 789.5 49.8 793 L40.2 793 Q38.6 789.5 37.2 786 Z" fill="#c4c4c4"/><circle cx="42" cy="813.5" r="7.6" fill="none" stroke="#c4c4c4" stroke-width="1.9"/><path d="M47.6 819.4 L56.8 829" stroke="#c4c4c4" stroke-width="2.8" fill="none"/><rect x="30" y="850" width="11" height="11" fill="#222" stroke="#c4c4c4" stroke-width="1.2"/><rect x="33" y="853" width="5" height="5" fill="#535353"/><rect x="24.6" y="844.6" width="11" height="11" fill="#fff" stroke="#222" stroke-width="0.8"/><path d="M25 855.2 L35.2 845" stroke="#ff0c0c" stroke-width="1.6"/><path d="M53.5 852.5 L53.5 848.5 L62 848.5 L62 859" fill="none" stroke="#c4c4c4" stroke-width="2"/><path d="M50 852.5 L53.5 848 L57 852.5 Z M58.3 857.5 L62 862.2 L65.7 857.5 Z" fill="#c4c4c4"/><path d="M50.3 852.3 L53.5 846.5 L56.7 852.3 Z" fill="#c4c4c4"/><rect x="38" y="883" width="29" height="29" fill="#fff"/><rect x="45.5" y="890.5" width="14" height="14" fill="#444"/><path d="M39 911 L66 884" stroke="#ff0c0c" stroke-width="2.4"/><rect x="24" y="868.5" width="29.5" height="29.5" fill="#fff" stroke="#444" stroke-width="0.8"/><path d="M25 897 L52.5 869.5" stroke="#ff0c0c" stroke-width="2.4"/><rect x="25" y="924.5" width="21" height="18" rx="2.5" fill="#333"/><rect x="29.5" y="927.5" width="11.5" height="11.5" fill="none" stroke="#c4c4c4" stroke-width="1.5"/><path d="M52.3 926.5 L65.5 926.5 L65.5 930.5 L64.3 930.5 L64.3 928.6 L60.6 928.6 L60.6 936.5 L62.8 936.5 L62.8 938 L55 938 L55 936.5 L57.2 936.5 L57.2 928.6 L53.5 928.6 L53.5 930.5 L52.3 930.5 Z" fill="#c4c4c4"/><rect x="25" y="953" width="41.5" height="32" rx="3" fill="#333"/><rect x="33.2" y="958.3" width="24" height="21" fill="#fff" stroke="#888" stroke-width="0.8"/><path d="M34 978.6 L56.5 959" stroke="#ff0c0c" stroke-width="2.3"/><path d="M65.0 978.5 L65.0 983.5 L60.0 983.5 Z" fill="#c4c4c4"/><rect x="40" y="1008" width="16.5" height="11.5" fill="#c4c4c4"/><path d="M40 1005.5 L57 1005.5" stroke="#c4c4c4" stroke-width="1.6" stroke-dasharray="2 2.4" fill="none"/><path d="M37.6 1008 L37.6 1020" stroke="#c4c4c4" stroke-width="1.6" stroke-dasharray="2 2.4" fill="none"/><path d="M65.0 1023.0 L65.0 1028.5 L59.5 1028.5 Z" fill="#c4c4c4"/><rect x="25" y="1037" width="41.5" height="32" rx="3" fill="#333"/><rect x="38.5" y="1044.5" width="16.5" height="17" fill="none" stroke="#c4c4c4" stroke-width="1.6"/><rect x="41.5" y="1048" width="7" height="5" fill="none" stroke="#c4c4c4" stroke-width="1.3"/><rect x="45" y="1051.5" width="7" height="5.5" fill="#333" stroke="#c4c4c4" stroke-width="1.3"/><path d="M65.0 1063.0 L65.0 1068.0 L60.0 1068.0 Z" fill="#c4c4c4"/></svg>
<div style="left:1379px;top:121px;width:380px;height:921px;background:#535353;box-shadow:-1px 1px 5px rgba(0,0,0,.33)"></div>
<div style="left:1379px;top:121px;width:380px;height:6px;background:#3c3c3c"></div>
<div style="left:1379px;top:127px;width:380px;height:41px;background:#424242"></div>
<div style="left:1379px;top:127px;width:93px;height:41px;background:#535353"></div>
<div style="left:1580px;top:127px;width:1px;height:41px;background:#3a3a3a"></div>
<div style="left:1379px;top:121px;width:2px;height:920px;background:#3c3c3c"></div>
<div style="left:1758px;top:121px;width:1px;height:920px;background:#3c3c3c"></div>
<svg style="left:1392px;top:142px" width="10" height="15" fill="none" stroke="#b8b8b8" stroke-width="1.5"><path d="M1.2 5.8 L5 1.6 L8.8 5.8 M1.2 9.2 L5 13.4 L8.8 9.2"/></svg>
<div class="t " style="left:1408.50px;top:139.84px;font-size:15px;line-height:18px;transform-origin:0 0;transform:scaleX(1.0069);font-weight:bold;color:#f4f4f4;">Pages</div>
<div class="t " style="left:1491.00px;top:139.84px;font-size:15px;line-height:18px;transform-origin:0 0;transform:scaleX(1.0260);font-weight:bold;color:#b4b4b4;">Swatches</div>
<svg style="left:1696px;top:141px" width="18" height="14" fill="none" stroke="#dcdcdc" stroke-width="1.6"><path d="M1.5 1.5 L7 7 L1.5 12.5 M9.5 1.5 L15 7 L9.5 12.5"/></svg>
<div style="left:1723px;top:139px;width:1px;height:18px;background:#9a9a9a"></div>
<svg style="left:1734px;top:142px" width="17" height="13" fill="#c6c6c6"><rect x="0" y="0" width="16" height="1.4"/><rect x="0" y="3.5" width="16" height="1.4"/><rect x="0" y="7" width="16" height="1.4"/><rect x="0" y="10.5" width="16" height="1.4"/></svg>
<div class="t " style="left:1386.50px;top:180.38px;font-size:15.5px;line-height:19px;transform-origin:0 0;transform:scaleX(0.9963);color:#f0f0f0;">[None]</div>
<div class="t " style="left:1386.50px;top:223.18px;font-size:15.5px;line-height:19px;transform-origin:0 0;transform:scaleX(0.9384);color:#f0f0f0;">A-Master</div>
<div style="left:1700.5px;top:174px;width:26px;height:35px;background:#fff;border:1px solid #9a9a9a"></div>
<div style="left:1675px;top:217.5px;width:51.5px;height:36px;background:#fff;border:1px solid #9a9a9a"></div>
<div style="left:1675px;top:217.5px;width:51.5px;height:1px;background:#2aa3ea"></div>
<div style="left:1700.5px;top:218px;width:1px;height:35px;background:#8a8a8a"></div>
<div style="left:1686px;top:221px;width:0;height:28px;border-left:1px dotted #4a90ff"></div>
<div style="left:1677px;top:249px;width:9px;height:0;border-top:1px dotted #4a90ff"></div>
<div style="left:1676px;top:250.5px;width:4px;height:3px;background:#2a45a0"></div>
<div style="left:1723px;top:250.5px;width:3.5px;height:3px;background:#2a45a0"></div>
<svg style="left:1742px;top:174px" width="14" height="9" fill="none" stroke="#5e5e5e" stroke-width="1.2"><path d="M1 7 L7 1.5 L13 7"/></svg>
<svg style="left:1742px;top:244px" width="14" height="9" fill="none" stroke="#5e5e5e" stroke-width="1.2"><path d="M1 1.5 L7 7 L13 1.5"/></svg>
<svg style="left:1742px;top:272px" width="14" height="9" fill="none" stroke="#5e5e5e" stroke-width="1.2"><path d="M1 7 L7 1.5 L13 7"/></svg>
<svg style="left:1742px;top:978px" width="14" height="9" fill="none" stroke="#5e5e5e" stroke-width="1.2"><path d="M1 1.5 L7 7 L13 1.5"/></svg>
<div style="left:1381px;top:261.5px;width:377px;height:2.5px;background:#5c5c5c"></div>
<div style="left:1558.5px;top:270px;width:1.8px;height:69.5px;background:#c4c4c4"></div>
<svg style="left:1570px;top:269px" width="17" height="9"><path d="M1 1.2 L16 1.2 L8.5 8 Z" fill="#c6c6c6"/></svg>
<div style="left:1559.5px;top:278.5px;width:38px;height:54px;background:#fff;border:1px solid #9a9a9a"></div>
<svg style="left:1560px;top:279px" width="37.5" height="43" viewBox="0 0 37.5 43"><defs><linearGradient id="gbg" x1="0" y1="0" x2="0" y2="1"><stop offset="0" stop-color="#1a1430"/><stop offset="0.45" stop-color="#141a40"/><stop offset="0.62" stop-color="#23357a"/><stop offset="1" stop-color="#2c4796"/></linearGradient><radialGradient id="gx" cx="0.5" cy="0.5" r="0.5"><stop offset="0" stop-color="#6f7a3a"/><stop offset="0.3" stop-color="#2f5f55"/><stop offset="0.7" stop-color="#1c3358"/><stop offset="1" stop-color="#18204a" stop-opacity="0.6"/></radialGradient></defs><rect width="37.5" height="43" fill="url(#gbg)"/><ellipse cx="7" cy="5" rx="8" ry="5" fill="#4a2a4a" opacity="0.55"/><circle cx="18.5" cy="18" r="12" fill="url(#gx)"/><circle cx="18.5" cy="18" r="11.5" fill="none" stroke="#2f7f80" stroke-width="0.9" opacity="0.7" stroke-dasharray="1.5 0.8"/><circle cx="18.5" cy="18" r="7.5" fill="none" stroke="#3a8a7a" stroke-width="0.7" opacity="0.55" stroke-dasharray="1 1"/><path d="M13 11 Q11 15 15 17 M16 21 Q20 16 23 21 Q20 25 17 23" fill="none" stroke="#d4a82a" stroke-width="1.1" opacity="0.85"/><rect x="3" y="19" width="5.9" height="6" fill="#6a1030"/><rect x="5.6" y="21" width="1.2" height="1.2" fill="#ff3d7a"/><rect x="11.8" y="0.8" width="12.5" height="2.2" fill="#fff"/><rect x="8.9" y="30" width="18.3" height="1.9" fill="#fff"/><rect x="5" y="34" width="25.5" height="3" fill="#fff"/><rect x="13.7" y="38" width="8.6" height="3" fill="#fff"/></svg>
<div class="t " style="left:1572.80px;top:343.04px;font-size:15px;line-height:18px;transform-origin:0 0;transform:scaleX(0.7192);color:#f0f0f0;">1</div>
<div style="left:1522px;top:374.3px;width:75.8px;height:55px;background:#fff;border:1px solid #9a9a9a"></div>
<svg style="left:1522px;top:374.3px" width="77" height="55" viewBox="0 0 77 55"><rect x="1.5" y="17.0" width="15.0" height="32.5" fill="#6b6b6b"/><rect x="1.5" y="22.0" width="15.0" height="2.2" fill="#000"/><rect x="1.5" y="25.5" width="15.0" height="3.5" fill="#000"/><rect x="1.5" y="47.5" width="15.0" height="2.0" fill="#000"/><rect x="1.5" y="20.5" width="15.0" height="0.7" fill="#999"/><rect x="1.5" y="31.0" width="15.0" height="0.8" fill="#8a8a8a"/><rect x="1.5" y="36.0" width="15.0" height="0.8" fill="#858585"/><rect x="1.5" y="41.5" width="15.0" height="0.8" fill="#8a8a8a"/><rect x="1.5" y="44.5" width="15.0" height="0.5" fill="#ddd"/><rect x="19.5" y="4.5" width="15.5" height="45.0" fill="#6b6b6b"/><rect x="19.5" y="4.5" width="15.5" height="1.5" fill="#000"/><rect x="19.5" y="22.5" width="15.5" height="1.2" fill="#000"/><rect x="19.5" y="25.5" width="15.5" height="3.8" fill="#000"/><rect x="19.5" y="47.5" width="15.5" height="2.0" fill="#000"/><rect x="19.5" y="8.0" width="15.5" height="0.8" fill="#cfcfcf"/><rect x="19.5" y="15.5" width="15.5" height="1.0" fill="#fff"/><rect x="19.5" y="37.0" width="15.5" height="1.0" fill="#8a8a8a"/><rect x="19.5" y="43.0" width="15.5" height="0.6" fill="#858585"/><rect x="38.5" y="0.8" width="36.8" height="53.6" fill="#9cc8f6"/><rect x="39.0" y="4.5" width="15.0" height="45.0" fill="#4a7db3"/><rect x="39.0" y="22.5" width="15.0" height="4.0" fill="#1a4a80"/><rect x="39.0" y="27.5" width="15.0" height="1.5" fill="#1a4a80"/><rect x="39.0" y="47.5" width="15.0" height="2.0" fill="#1a4a80"/><rect x="39.0" y="32.0" width="15.0" height="0.7" fill="#5d8cc0"/><rect x="39.0" y="38.0" width="15.0" height="0.7" fill="#5d8cc0"/><rect x="39.0" y="43.0" width="15.0" height="0.7" fill="#5d8cc0"/><rect x="57.0" y="16.5" width="15.0" height="33.0" fill="#4a7db3"/><rect x="57.0" y="22.5" width="15.0" height="6.0" fill="#1a4a80"/><rect x="57.0" y="47.5" width="15.0" height="2.0" fill="#1a4a80"/><rect x="57.0" y="30.5" width="15.0" height="0.7" fill="#5d8cc0"/><rect x="57.0" y="33.5" width="15.0" height="0.7" fill="#9cc8f6"/><rect x="57.0" y="38.0" width="15.0" height="0.7" fill="#5d8cc0"/><rect x="57.0" y="43.0" width="15.0" height="0.7" fill="#5d8cc0"/><rect x="58" y="1.5" width="17.5" height="14.5" fill="#fff"/><rect x="17" y="11" width="41" height="4.2" fill="#1aa0ee"/><rect x="19.5" y="11" width="15.5" height="4.2" fill="#0b5f8c"/><rect x="23" y="12" width="12" height="1.4" fill="#1681b8"/><path d="M1 54 L1 49.8 Q3.5 48.5 6 51 L6 54 Z" fill="#2a45a0"/><path d="M69.5 54 Q69.5 49 72.7 49 Q76 49 76 54 Z" fill="#2f55b8"/><rect x="72.2" y="51.5" width="1.4" height="2" fill="#9cc8f6"/></svg>
<div class="t " style="left:1523.80px;top:376.61px;font-size:14.5px;line-height:17px;transform-origin:0 0;transform:scaleX(0.9822);color:#000;">A</div>
<div class="t " style="left:1581.50px;top:376.61px;font-size:14.5px;line-height:17px;transform-origin:0 0;transform:scaleX(1.0027);font-weight:bold;color:#000;">A</div>
<div style="left:1559px;top:366px;width:2px;height:70px;background:#c4c4c4"></div>
<div style="left:1540px;top:435.8px;width:35px;height:21.4px;background:#3089e8"></div>
<div class="t " style="left:1545.00px;top:438.18px;font-size:15.5px;line-height:19px;transform-origin:0 0;transform:scaleX(1.1159);font-weight:bold;color:#fff;">2-3</div>
<div style="left:1522px;top:470.0px;width:75.8px;height:55px;background:#fff;border:1px solid #9a9a9a"></div>
<svg style="left:1522px;top:470.0px" width="77" height="55" viewBox="0 0 77 55"><rect x="0.5" y="0.6" width="11" height="1" fill="#1fa4ec"/><rect x="17" y="1" width="43.5" height="2" fill="#1fa4ec"/><rect x="65" y="0.6" width="11" height="1" fill="#1fa4ec"/><path d="M17.7 6 L17.7 52" stroke="#3d86f0" stroke-width="1" stroke-dasharray="1 3"/><path d="M1.7 20 L1.7 46" stroke="#3d86f0" stroke-width="1" stroke-dasharray="1 3"/><path d="M5 48.5 L18 48.5 M7 52 L18 52" stroke="#3d86f0" stroke-width="1" stroke-dasharray="1 3"/><rect x="19.5" y="5" width="5" height="0.6" fill="#bbb"/><path d="M1 54 L1 49.5 Q3.5 48 6 50.5 L6 54 Z" fill="#2a45a0"/><path d="M69.5 54 Q69.5 49 72.7 49 Q76 49 76 54 Z" fill="#2a45a0"/><rect x="72.2" y="51.5" width="1.4" height="2" fill="#cfd6f0"/></svg>
<div class="t " style="left:1523.80px;top:472.31px;font-size:14.5px;line-height:17px;transform-origin:0 0;transform:scaleX(0.9822);color:#000;">A</div>
<div class="t " style="left:1581.80px;top:472.31px;font-size:14.5px;line-height:17px;transform-origin:0 0;transform:scaleX(0.9822);color:#000;">A</div>
<div style="left:1559px;top:461.7px;width:2px;height:70px;background:#c4c4c4"></div>
<div class="t " style="left:1546.00px;top:534.38px;font-size:15.5px;line-height:19px;transform-origin:0 0;transform:scaleX(0.9507);color:#f0f0f0;">4-5</div>
<div style="left:1522px;top:566.0px;width:75.8px;height:55px;background:#fff;border:1px solid #9a9a9a"></div>
<svg style="left:1522px;top:566.0px" width="77" height="55" viewBox="0 0 77 55"><rect x="0.5" y="0.6" width="11" height="1" fill="#1fa4ec"/><rect x="17" y="1" width="43.5" height="2" fill="#1fa4ec"/><rect x="65" y="0.6" width="11" height="1" fill="#1fa4ec"/><path d="M17.7 6 L17.7 52" stroke="#3d86f0" stroke-width="1" stroke-dasharray="1 3"/><path d="M1.7 20 L1.7 46" stroke="#3d86f0" stroke-width="1" stroke-dasharray="1 3"/><path d="M5 48.5 L18 48.5 M7 52 L18 52" stroke="#3d86f0" stroke-width="1" stroke-dasharray="1 3"/><rect x="19.5" y="5" width="5" height="0.6" fill="#bbb"/><path d="M1 54 L1 49.5 Q3.5 48 6 50.5 L6 54 Z" fill="#2a45a0"/><path d="M69.5 54 Q69.5 49 72.7 49 Q76 49 76 54 Z" fill="#2a45a0"/><rect x="72.2" y="51.5" width="1.4" height="2" fill="#cfd6f0"/></svg>
<div class="t " style="left:1523.80px;top:568.31px;font-size:14.5px;line-height:17px;transform-origin:0 0;transform:scaleX(0.9822);color:#000;">A</div>
<div class="t " style="left:1581.80px;top:568.31px;font-size:14.5px;line-height:17px;transform-origin:0 0;transform:scaleX(0.9822);color:#000;">A</div>
<div style="left:1559px;top:557.7px;width:2px;height:70px;background:#c4c4c4"></div>
<div class="t " style="left:1546.00px;top:630.38px;font-size:15.5px;line-height:19px;transform-origin:0 0;transform:scaleX(0.9507);color:#f0f0f0;">6-7</div>
<div style="left:1522px;top:662.0px;width:75.8px;height:55px;background:#fff;border:1px solid #9a9a9a"></div>
<svg style="left:1522px;top:662.0px" width="77" height="55" viewBox="0 0 77 55"><rect x="0.5" y="0.6" width="11" height="1" fill="#1fa4ec"/><rect x="17" y="1" width="43.5" height="2" fill="#1fa4ec"/><rect x="65" y="0.6" width="11" height="1" fill="#1fa4ec"/><path d="M17.7 6 L17.7 52" stroke="#3d86f0" stroke-width="1" stroke-dasharray="1 3"/><path d="M1.7 20 L1.7 46" stroke="#3d86f0" stroke-width="1" stroke-dasharray="1 3"/><path d="M5 48.5 L18 48.5 M7 52 L18 52" stroke="#3d86f0" stroke-width="1" stroke-dasharray="1 3"/><rect x="19.5" y="5" width="5" height="0.6" fill="#bbb"/><path d="M1 54 L1 49.5 Q3.5 48 6 50.5 L6 54 Z" fill="#2a45a0"/><path d="M69.5 54 Q69.5 49 72.7 49 Q76 49 76 54 Z" fill="#2a45a0"/><rect x="72.2" y="51.5" width="1.4" height="2" fill="#cfd6f0"/></svg>
<div class="t " style="left:1523.80px;top:664.31px;font-size:14.5px;line-height:17px;transform-origin:0 0;transform:scaleX(0.9822);color:#000;">A</div>
<div class="t " style="left:1581.80px;top:664.31px;font-size:14.5px;line-height:17px;transform-origin:0 0;transform:scaleX(0.9822);color:#000;">A</div>
<div style="left:1559px;top:653.7px;width:2px;height:70px;background:#c4c4c4"></div>
<div class="t " style="left:1546.00px;top:726.38px;font-size:15.5px;line-height:19px;transform-origin:0 0;transform:scaleX(0.9507);color:#f0f0f0;">8-9</div>
<div style="left:1522px;top:758px;width:37.5px;height:55px;background:#253d8e;border:1px solid #8a8a9a"></div>
<div style="left:1559px;top:749.7px;width:2px;height:70px;background:#c4c4c4"></div>
<div class="t " style="left:1532.00px;top:822.38px;font-size:15.5px;line-height:19px;transform-origin:0 0;transform:scaleX(0.8410);color:#f0f0f0;">10</div>
<div style="left:1381px;top:990px;width:377px;height:1px;background:#4a4a4a"></div>
<div class="t " style="left:1389.50px;top:1003.38px;font-size:15.5px;line-height:19px;transform-origin:0 0;transform:scaleX(0.9309);color:#f0f0f0;">10 Pages in 6 Spreads</div>
<svg style="left:1616px;top:999px" width="34" height="24" fill="none" stroke="#c6c6c6" stroke-width="1.5"><path d="M8.5 7.5 L8.5 2.5 L14.5 2.5 L18.5 6.5 L18.5 17 L13 17"/><path d="M14.5 2.5 L14.5 6.5 L18.5 6.5"/><path d="M2.5 8 L10 8 L13 10.8 L13 17.5 L2.5 17.5 Z" fill="#535353"/><path d="M22.5 16.5 L27 16.5 L24.7 19.5 Z" fill="#c6c6c6" stroke="none"/></svg>
<svg style="left:1666px;top:1002px" width="18" height="18" fill="none" stroke="#c6c6c6" stroke-width="1.4"><rect x="1" y="1" width="15.5" height="15.5"/><path d="M8.7 5 L8.7 12.5 M5 8.7 L12.5 8.7"/></svg>
<svg style="left:1705px;top:1000px" width="19" height="21" fill="none" stroke="#c6c6c6" stroke-width="1.5"><path d="M1 4.5 L17.5 4.5 M6 4 L6 1.5 L12.5 1.5 L12.5 4"/><path d="M3 5 L3.8 18.5 L14.7 18.5 L15.5 5"/><path d="M6.6 7.5 L6.6 16 M9.25 7.5 L9.25 16 M11.9 7.5 L11.9 16"/></svg>
<div style="left:1379px;top:1030px;width:380px;height:11px;background:#4a4a4a;border-top:1.5px solid #333"></div>
<svg style="left:1555px;top:1034px" width="30" height="6" fill="#353535"><rect x="0" y="0" width="1" height="6"/><rect x="3" y="0" width="1" height="6"/><rect x="6" y="0" width="1" height="6"/><rect x="9" y="0" width="1" height="6"/><rect x="12" y="0" width="1" height="6"/><rect x="15" y="0" width="1" height="6"/><rect x="18" y="0" width="1" height="6"/><rect x="21" y="0" width="1" height="6"/><rect x="24" y="0" width="1" height="6"/><rect x="27" y="0" width="1" height="6"/></svg>
</body></html>
